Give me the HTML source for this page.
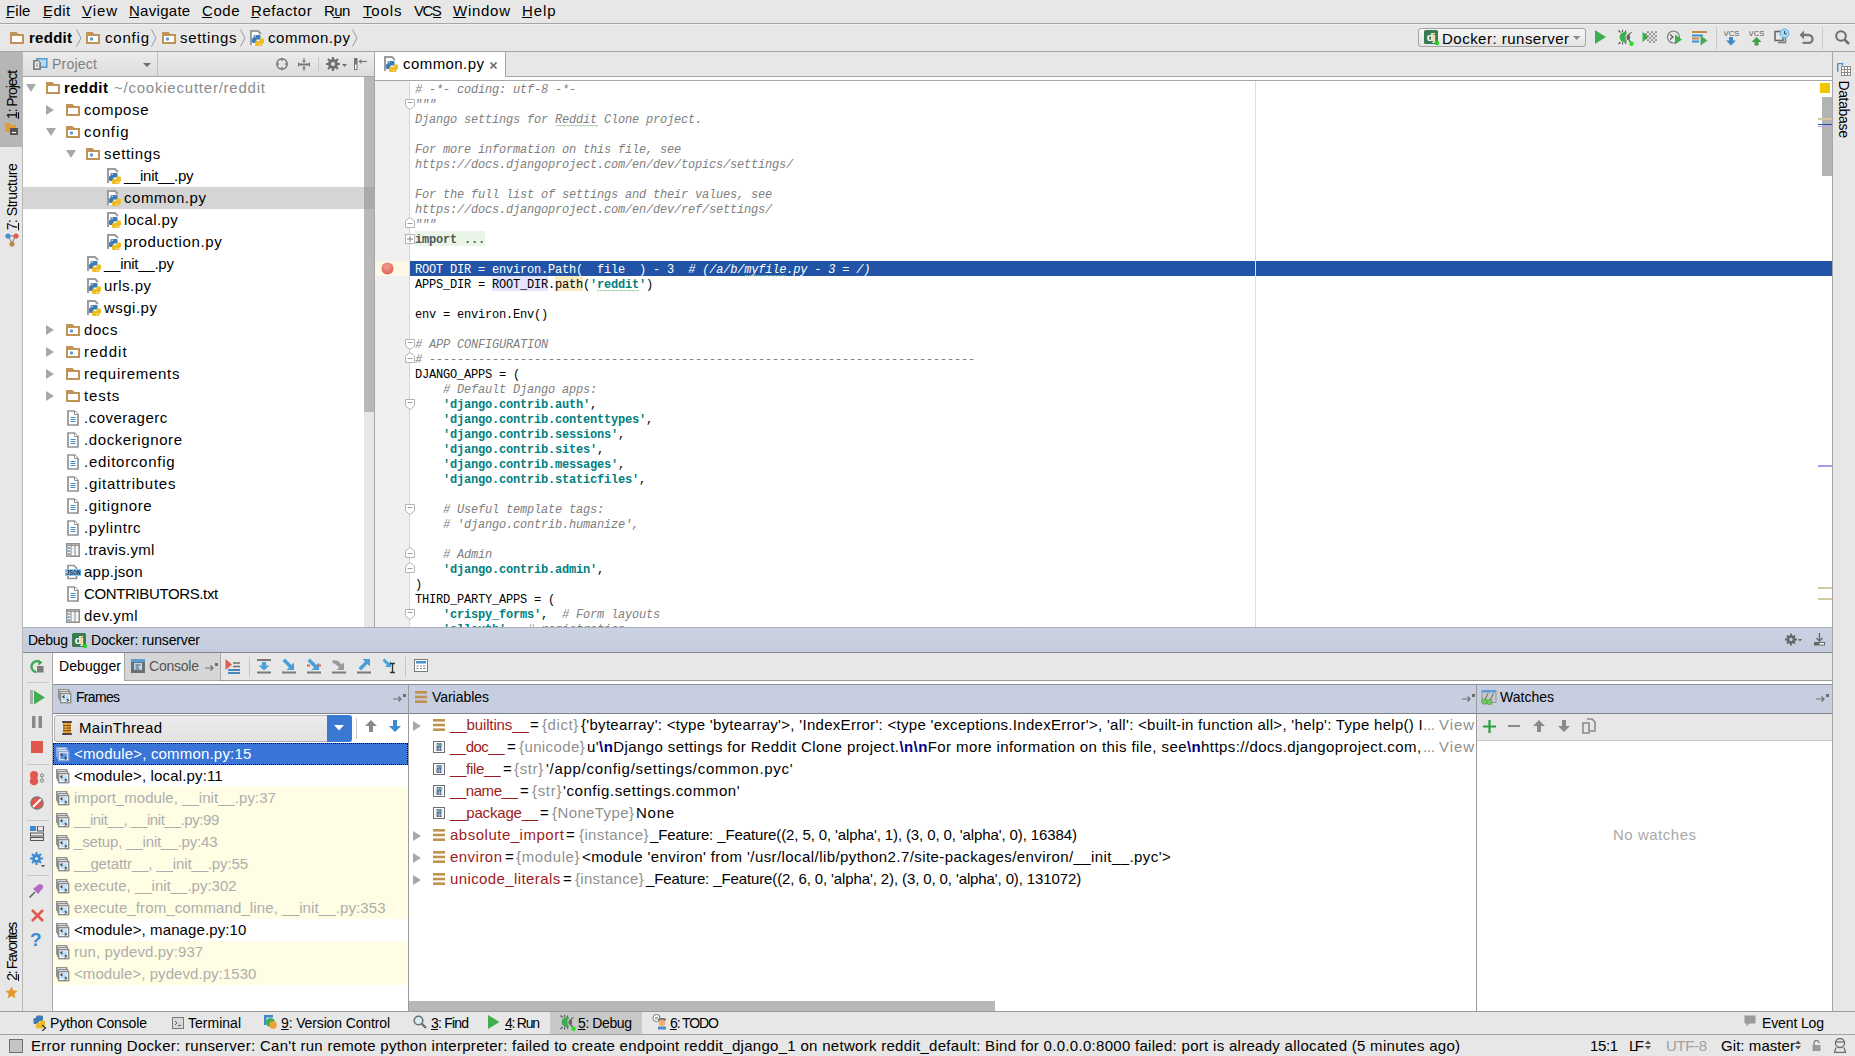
<!DOCTYPE html>
<html><head><meta charset="utf-8"><style>
html,body{margin:0;padding:0;}
body{width:1855px;height:1056px;position:relative;overflow:hidden;background:#e8e8e8;font-family:"Liberation Sans",sans-serif;}
.a{position:absolute;}
.t{position:absolute;white-space:pre;line-height:normal;}
u{text-decoration:none;border-bottom:1px solid currentColor;}
</style></head><body>
<div class="a" style="left:0px;top:0px;width:1855px;height:1056px;background:#e7e7e7;"></div>
<div class="a" style="left:0px;top:23px;width:1855px;height:1px;background:#a6a6a6;"></div>
<div class="a" style="left:0px;top:24px;width:1855px;height:1px;background:#f0f0f0;"></div>
<div class="a" style="left:0px;top:51px;width:1855px;height:1px;background:#a6a6a6;"></div>
<div class="a" style="left:0px;top:52px;width:22px;height:960px;background:#e7e7e7;"></div>
<div class="a" style="left:22px;top:52px;width:1px;height:960px;background:#b8b8b8;"></div>
<div class="a" style="left:0px;top:52px;width:22px;height:95px;background:#b6b6b6;"></div>
<div class="a" style="left:1832px;top:52px;width:1px;height:960px;background:#a6a6a6;"></div>
<div class="a" style="left:23px;top:52px;width:352px;height:24px;background:linear-gradient(#ececec,#dcdcdc);"></div>
<div class="a" style="left:23px;top:76px;width:352px;height:1px;background:#a6a6a6;"></div>
<div class="a" style="left:157px;top:52px;width:1px;height:24px;background:#c0c0c0;"></div>
<div class="a" style="left:23px;top:77px;width:341px;height:550px;background:#ffffff;"></div>
<div class="a" style="left:364px;top:77px;width:10px;height:335px;background:#b8b8b8;"></div>
<div class="a" style="left:374px;top:52px;width:1px;height:575px;background:#a6a6a6;"></div>
<div class="a" style="left:375px;top:52px;width:1457px;height:24px;background:#e7e7e7;"></div>
<div class="a" style="left:375px;top:76px;width:1457px;height:1px;background:#a6a6a6;"></div>
<div class="a" style="left:375px;top:77px;width:1457px;height:3px;background:#ffffff;"></div>
<div class="a" style="left:375px;top:80px;width:1457px;height:1px;background:#a6a6a6;"></div>
<div class="a" style="left:375px;top:81px;width:1457px;height:546px;background:#ffffff;"></div>
<div class="a" style="left:375px;top:81px;width:35px;height:546px;background:#f0f0f0;"></div>
<div class="a" style="left:409px;top:81px;width:1px;height:546px;background:#d6d6d6;"></div>
<div class="a" style="left:1822px;top:97px;width:10px;height:79px;background:#b3b3b3;"></div>
<div class="t" style="left:6px;top:2px;font-size:15px;color:#000;font-weight:normal;font-style:normal;font-family:'Liberation Sans', sans-serif;letter-spacing:0.076px;">File</div>
<div class="a" style="left:6px;top:17px;width:8px;height:1px;background:#000;"></div>
<div class="t" style="left:43px;top:2px;font-size:15px;color:#000;font-weight:normal;font-style:normal;font-family:'Liberation Sans', sans-serif;letter-spacing:0.447px;">Edit</div>
<div class="a" style="left:43px;top:17px;width:8px;height:1px;background:#000;"></div>
<div class="t" style="left:82px;top:2px;font-size:15px;color:#000;font-weight:normal;font-style:normal;font-family:'Liberation Sans', sans-serif;letter-spacing:0.950px;">View</div>
<div class="a" style="left:82px;top:17px;width:9px;height:1px;background:#000;"></div>
<div class="t" style="left:129px;top:2px;font-size:15px;color:#000;font-weight:normal;font-style:normal;font-family:'Liberation Sans', sans-serif;letter-spacing:0.285px;">Navigate</div>
<div class="a" style="left:129px;top:17px;width:10px;height:1px;background:#000;"></div>
<div class="t" style="left:202px;top:2px;font-size:15px;color:#000;font-weight:normal;font-style:normal;font-family:'Liberation Sans', sans-serif;letter-spacing:0.580px;">Code</div>
<div class="a" style="left:202px;top:17px;width:10px;height:1px;background:#000;"></div>
<div class="t" style="left:251px;top:2px;font-size:15px;color:#000;font-weight:normal;font-style:normal;font-family:'Liberation Sans', sans-serif;letter-spacing:0.585px;">Refactor</div>
<div class="a" style="left:251px;top:17px;width:8px;height:1px;background:#000;"></div>
<div class="t" style="left:324px;top:2px;font-size:15px;color:#000;font-weight:normal;font-style:normal;font-family:'Liberation Sans', sans-serif;letter-spacing:-0.566px;">Run</div>
<div class="a" style="left:333px;top:17px;width:7px;height:1px;background:#000;"></div>
<div class="t" style="left:363px;top:2px;font-size:15px;color:#000;font-weight:normal;font-style:normal;font-family:'Liberation Sans', sans-serif;letter-spacing:0.867px;">Tools</div>
<div class="a" style="left:363px;top:17px;width:9px;height:1px;background:#000;"></div>
<div class="t" style="left:414px;top:2px;font-size:15px;color:#000;font-weight:normal;font-style:normal;font-family:'Liberation Sans', sans-serif;letter-spacing:-1.572px;">VCS</div>
<div class="a" style="left:433px;top:17px;width:8px;height:1px;background:#000;"></div>
<div class="t" style="left:453px;top:2px;font-size:15px;color:#000;font-weight:normal;font-style:normal;font-family:'Liberation Sans', sans-serif;letter-spacing:0.728px;">Window</div>
<div class="a" style="left:453px;top:17px;width:13px;height:1px;background:#000;"></div>
<div class="t" style="left:522px;top:2px;font-size:15px;color:#000;font-weight:normal;font-style:normal;font-family:'Liberation Sans', sans-serif;letter-spacing:0.914px;">Help</div>
<div class="a" style="left:522px;top:17px;width:10px;height:1px;background:#000;"></div>
<svg class="a" style="left:10px;top:32px" width="14" height="12" viewBox="0 0 14 12"><path d="M0 0h6.5l2 2h5.5v10h-14z" fill="#c09458"/><rect x="2" y="4" width="10" height="6" fill="#fff"/></svg>
<div class="t" style="left:29px;top:29px;font-size:15px;color:#000;font-weight:bold;font-style:normal;font-family:'Liberation Sans', sans-serif;letter-spacing:0.266px;">reddit</div>
<svg class="a" style="left:76px;top:29px" width="6" height="18" viewBox="0 0 6 18"><path d="M0.5 0.5L5 9L0.5 17.5" fill="none" stroke="#9a9a9a" stroke-width="1"/></svg>
<svg class="a" style="left:86px;top:32px" width="14" height="12" viewBox="0 0 14 12"><path d="M0 0h6.5l2 2h5.5v10h-14z" fill="#c09458"/><rect x="2" y="4" width="10" height="6" fill="#fff"/><circle cx="5.5" cy="7" r="1.7" fill="#5f9ccc"/></svg>
<div class="t" style="left:105px;top:29px;font-size:15px;color:#000;font-weight:normal;font-style:normal;font-family:'Liberation Sans', sans-serif;letter-spacing:0.794px;">config</div>
<svg class="a" style="left:151px;top:29px" width="6" height="18" viewBox="0 0 6 18"><path d="M0.5 0.5L5 9L0.5 17.5" fill="none" stroke="#9a9a9a" stroke-width="1"/></svg>
<svg class="a" style="left:162px;top:32px" width="14" height="12" viewBox="0 0 14 12"><path d="M0 0h6.5l2 2h5.5v10h-14z" fill="#c09458"/><rect x="2" y="4" width="10" height="6" fill="#fff"/><circle cx="5.5" cy="7" r="1.7" fill="#5f9ccc"/></svg>
<div class="t" style="left:180px;top:29px;font-size:15px;color:#000;font-weight:normal;font-style:normal;font-family:'Liberation Sans', sans-serif;letter-spacing:0.685px;">settings</div>
<svg class="a" style="left:240px;top:29px" width="6" height="18" viewBox="0 0 6 18"><path d="M0.5 0.5L5 9L0.5 17.5" fill="none" stroke="#9a9a9a" stroke-width="1"/></svg>
<svg class="a" style="left:250px;top:30px" width="14" height="16" viewBox="0 0 14 16"><path d="M1 15V1h7l3 3" fill="none" stroke="#9b9b9b" stroke-width="2"/><rect x="2" y="2" width="6" height="13" fill="#fff"/><rect x="3.5" y="5" width="7" height="4.5" rx="1.3" fill="#3d7ab6"/><rect x="2" y="8" width="4.5" height="5" rx="1.2" fill="#3d7ab6"/><rect x="9.5" y="8.5" width="4.5" height="5" rx="1.2" fill="#edbb22"/><rect x="5" y="11" width="7.5" height="5" rx="1.3" fill="#edbb22"/><circle cx="5.2" cy="6.3" r="0.7" fill="#fff"/><circle cx="10" cy="14.5" r="0.7" fill="#fff"/></svg>
<div class="t" style="left:268px;top:29px;font-size:15px;color:#000;font-weight:normal;font-style:normal;font-family:'Liberation Sans', sans-serif;letter-spacing:0.559px;">common.py</div>
<svg class="a" style="left:352px;top:29px" width="6" height="18" viewBox="0 0 6 18"><path d="M0.5 0.5L5 9L0.5 17.5" fill="none" stroke="#9a9a9a" stroke-width="1"/></svg>
<svg class="a" style="left:33px;top:58px" width="15" height="13" viewBox="0 0 15 13"><rect x="3.8" y="0.8" width="10" height="8.4" fill="#b5dbf4" stroke="#5a9ccc" stroke-width="1.6"/><path d="M0 2h5.5l2.5 2.5V12H0z" fill="#808080"/><rect x="1.8" y="3.5" width="4.4" height="6.8" fill="#eee"/><path d="M3 6h2M3 8h2" stroke="#808080" stroke-width="1"/></svg>
<div class="t" style="left:52px;top:56px;font-size:14px;color:#7f7f7f;font-weight:normal;font-style:normal;font-family:'Liberation Sans', sans-serif;letter-spacing:0.237px;">Project</div>
<svg class="a" style="left:143px;top:63px" width="9" height="5" viewBox="0 0 9 5"><path d="M0 0h8l-4 4z" fill="#6e6e6e"/></svg>
<svg class="a" style="left:276px;top:58px" width="12" height="12" viewBox="0 0 12 12"><circle cx="6" cy="6" r="5.2" fill="none" stroke="#777" stroke-width="1.4"/><path d="M6 0.5v2.5M6 9v2.5M0.5 6h2.5M9 6h2.5" stroke="#777" stroke-width="1.4"/></svg>
<svg class="a" style="left:298px;top:58px" width="12" height="13" viewBox="0 0 12 13"><path d="M0.5 4.5v1.5h11V4.5M0.5 8.5V7h11v1.5" fill="none" stroke="#777" stroke-width="1.1"/><path d="M6 0v4M6 9v4" stroke="#777" stroke-width="1.1"/><path d="M4 2.5L6 5L8 2.5zM4 10.5L6 8L8 10.5z" fill="#777"/></svg>
<div class="a" style="left:318px;top:57px;width:1px;height:14px;background:#c6c6c6;"></div>
<svg class="a" style="left:326px;top:57px" width="21" height="14" viewBox="0 0 21 14"><circle cx="7" cy="7" r="3.5" fill="none" stroke="#707070" stroke-width="3"/><path d="M7 0v3M7 11v3M0 7h3M11 7h3M2 2l2 2M10 10l2 2M12 2l-2 2M2 12l2-2" stroke="#707070" stroke-width="2.2"/><path d="M16 7h5l-2.5 3z" fill="#707070"/></svg>
<svg class="a" style="left:354px;top:58px" width="13" height="12" viewBox="0 0 13 12"><rect x="0.5" y="0.5" width="2.5" height="11" fill="#fff" stroke="#777"/><rect x="0.5" y="0.5" width="2.5" height="6" fill="#777"/><path d="M5 3.5h8" stroke="#777" stroke-width="1.2"/><path d="M4.5 3.5L7.5 1V6z" fill="#777"/></svg>
<svg class="a" style="left:46px;top:82px" width="14" height="12" viewBox="0 0 14 12"><path d="M0 0h6.5l2 2h5.5v10h-14z" fill="#c09458"/><rect x="2" y="4" width="10" height="6" fill="#fff"/></svg>
<svg class="a" style="left:26px;top:84px" width="10" height="9" viewBox="0 0 10 9"><path d="M0 0L10 0L5 8z" fill="#a8a8a8"/></svg>
<div class="t" style="left:64px;top:79px;font-size:15px;color:#000;font-weight:bold;font-style:normal;font-family:'Liberation Sans', sans-serif;letter-spacing:0.466px;">reddit</div>
<div class="t" style="left:114px;top:79px;font-size:15px;color:#8c8c8c;font-weight:normal;font-style:normal;font-family:'Liberation Sans', sans-serif;letter-spacing:0.775px;">~/cookiecutter/reddit</div>
<svg class="a" style="left:66px;top:104px" width="14" height="12" viewBox="0 0 14 12"><path d="M0 0h6.5l2 2h5.5v10h-14z" fill="#c09458"/><rect x="2" y="4" width="10" height="6" fill="#fff"/></svg>
<svg class="a" style="left:46px;top:105px" width="9" height="10" viewBox="0 0 9 10"><path d="M0 0L8 5L0 10z" fill="#a8a8a8"/></svg>
<div class="t" style="left:84px;top:101px;font-size:15px;color:#000;font-weight:normal;font-style:normal;font-family:'Liberation Sans', sans-serif;letter-spacing:0.604px;">compose</div>
<svg class="a" style="left:66px;top:126px" width="14" height="12" viewBox="0 0 14 12"><path d="M0 0h6.5l2 2h5.5v10h-14z" fill="#c09458"/><rect x="2" y="4" width="10" height="6" fill="#fff"/><circle cx="5.5" cy="7" r="1.7" fill="#5f9ccc"/></svg>
<svg class="a" style="left:46px;top:128px" width="10" height="9" viewBox="0 0 10 9"><path d="M0 0L10 0L5 8z" fill="#a8a8a8"/></svg>
<div class="t" style="left:84px;top:123px;font-size:15px;color:#000;font-weight:normal;font-style:normal;font-family:'Liberation Sans', sans-serif;letter-spacing:0.894px;">config</div>
<svg class="a" style="left:86px;top:148px" width="14" height="12" viewBox="0 0 14 12"><path d="M0 0h6.5l2 2h5.5v10h-14z" fill="#c09458"/><rect x="2" y="4" width="10" height="6" fill="#fff"/><circle cx="5.5" cy="7" r="1.7" fill="#5f9ccc"/></svg>
<svg class="a" style="left:66px;top:150px" width="10" height="9" viewBox="0 0 10 9"><path d="M0 0L10 0L5 8z" fill="#a8a8a8"/></svg>
<div class="t" style="left:104px;top:145px;font-size:15px;color:#000;font-weight:normal;font-style:normal;font-family:'Liberation Sans', sans-serif;letter-spacing:0.650px;">settings</div>
<svg class="a" style="left:107px;top:168px" width="14" height="16" viewBox="0 0 14 16"><path d="M1 15V1h7l3 3" fill="none" stroke="#9b9b9b" stroke-width="2"/><rect x="2" y="2" width="6" height="13" fill="#fff"/><rect x="3.5" y="5" width="7" height="4.5" rx="1.3" fill="#3d7ab6"/><rect x="2" y="8" width="4.5" height="5" rx="1.2" fill="#3d7ab6"/><rect x="9.5" y="8.5" width="4.5" height="5" rx="1.2" fill="#edbb22"/><rect x="5" y="11" width="7.5" height="5" rx="1.3" fill="#edbb22"/><circle cx="5.2" cy="6.3" r="0.7" fill="#fff"/><circle cx="10" cy="14.5" r="0.7" fill="#fff"/></svg>
<div class="t" style="left:124px;top:167px;font-size:15px;color:#000;font-weight:normal;font-style:normal;font-family:'Liberation Sans', sans-serif;letter-spacing:-0.306px;">__init__.py</div>
<div class="a" style="left:23px;top:187px;width:341px;height:22px;background:#d5d5d5;"></div>
<div class="a" style="left:364px;top:187px;width:10px;height:22px;background:rgba(0,0,0,0.08);"></div>
<svg class="a" style="left:107px;top:190px" width="14" height="16" viewBox="0 0 14 16"><path d="M1 15V1h7l3 3" fill="none" stroke="#9b9b9b" stroke-width="2"/><rect x="2" y="2" width="6" height="13" fill="#fff"/><rect x="3.5" y="5" width="7" height="4.5" rx="1.3" fill="#3d7ab6"/><rect x="2" y="8" width="4.5" height="5" rx="1.2" fill="#3d7ab6"/><rect x="9.5" y="8.5" width="4.5" height="5" rx="1.2" fill="#edbb22"/><rect x="5" y="11" width="7.5" height="5" rx="1.3" fill="#edbb22"/><circle cx="5.2" cy="6.3" r="0.7" fill="#fff"/><circle cx="10" cy="14.5" r="0.7" fill="#fff"/></svg>
<div class="t" style="left:124px;top:189px;font-size:15px;color:#000;font-weight:normal;font-style:normal;font-family:'Liberation Sans', sans-serif;letter-spacing:0.559px;">common.py</div>
<svg class="a" style="left:107px;top:212px" width="14" height="16" viewBox="0 0 14 16"><path d="M1 15V1h7l3 3" fill="none" stroke="#9b9b9b" stroke-width="2"/><rect x="2" y="2" width="6" height="13" fill="#fff"/><rect x="3.5" y="5" width="7" height="4.5" rx="1.3" fill="#3d7ab6"/><rect x="2" y="8" width="4.5" height="5" rx="1.2" fill="#3d7ab6"/><rect x="9.5" y="8.5" width="4.5" height="5" rx="1.2" fill="#edbb22"/><rect x="5" y="11" width="7.5" height="5" rx="1.3" fill="#edbb22"/><circle cx="5.2" cy="6.3" r="0.7" fill="#fff"/><circle cx="10" cy="14.5" r="0.7" fill="#fff"/></svg>
<div class="t" style="left:124px;top:211px;font-size:15px;color:#000;font-weight:normal;font-style:normal;font-family:'Liberation Sans', sans-serif;letter-spacing:0.413px;">local.py</div>
<svg class="a" style="left:107px;top:234px" width="14" height="16" viewBox="0 0 14 16"><path d="M1 15V1h7l3 3" fill="none" stroke="#9b9b9b" stroke-width="2"/><rect x="2" y="2" width="6" height="13" fill="#fff"/><rect x="3.5" y="5" width="7" height="4.5" rx="1.3" fill="#3d7ab6"/><rect x="2" y="8" width="4.5" height="5" rx="1.2" fill="#3d7ab6"/><rect x="9.5" y="8.5" width="4.5" height="5" rx="1.2" fill="#edbb22"/><rect x="5" y="11" width="7.5" height="5" rx="1.3" fill="#edbb22"/><circle cx="5.2" cy="6.3" r="0.7" fill="#fff"/><circle cx="10" cy="14.5" r="0.7" fill="#fff"/></svg>
<div class="t" style="left:124px;top:233px;font-size:15px;color:#000;font-weight:normal;font-style:normal;font-family:'Liberation Sans', sans-serif;letter-spacing:0.641px;">production.py</div>
<svg class="a" style="left:87px;top:256px" width="14" height="16" viewBox="0 0 14 16"><path d="M1 15V1h7l3 3" fill="none" stroke="#9b9b9b" stroke-width="2"/><rect x="2" y="2" width="6" height="13" fill="#fff"/><rect x="3.5" y="5" width="7" height="4.5" rx="1.3" fill="#3d7ab6"/><rect x="2" y="8" width="4.5" height="5" rx="1.2" fill="#3d7ab6"/><rect x="9.5" y="8.5" width="4.5" height="5" rx="1.2" fill="#edbb22"/><rect x="5" y="11" width="7.5" height="5" rx="1.3" fill="#edbb22"/><circle cx="5.2" cy="6.3" r="0.7" fill="#fff"/><circle cx="10" cy="14.5" r="0.7" fill="#fff"/></svg>
<div class="t" style="left:104px;top:255px;font-size:15px;color:#000;font-weight:normal;font-style:normal;font-family:'Liberation Sans', sans-serif;letter-spacing:-0.266px;">__init__.py</div>
<svg class="a" style="left:87px;top:278px" width="14" height="16" viewBox="0 0 14 16"><path d="M1 15V1h7l3 3" fill="none" stroke="#9b9b9b" stroke-width="2"/><rect x="2" y="2" width="6" height="13" fill="#fff"/><rect x="3.5" y="5" width="7" height="4.5" rx="1.3" fill="#3d7ab6"/><rect x="2" y="8" width="4.5" height="5" rx="1.2" fill="#3d7ab6"/><rect x="9.5" y="8.5" width="4.5" height="5" rx="1.2" fill="#edbb22"/><rect x="5" y="11" width="7.5" height="5" rx="1.3" fill="#edbb22"/><circle cx="5.2" cy="6.3" r="0.7" fill="#fff"/><circle cx="10" cy="14.5" r="0.7" fill="#fff"/></svg>
<div class="t" style="left:104px;top:277px;font-size:15px;color:#000;font-weight:normal;font-style:normal;font-family:'Liberation Sans', sans-serif;letter-spacing:0.469px;">urls.py</div>
<svg class="a" style="left:87px;top:300px" width="14" height="16" viewBox="0 0 14 16"><path d="M1 15V1h7l3 3" fill="none" stroke="#9b9b9b" stroke-width="2"/><rect x="2" y="2" width="6" height="13" fill="#fff"/><rect x="3.5" y="5" width="7" height="4.5" rx="1.3" fill="#3d7ab6"/><rect x="2" y="8" width="4.5" height="5" rx="1.2" fill="#3d7ab6"/><rect x="9.5" y="8.5" width="4.5" height="5" rx="1.2" fill="#edbb22"/><rect x="5" y="11" width="7.5" height="5" rx="1.3" fill="#edbb22"/><circle cx="5.2" cy="6.3" r="0.7" fill="#fff"/><circle cx="10" cy="14.5" r="0.7" fill="#fff"/></svg>
<div class="t" style="left:104px;top:299px;font-size:15px;color:#000;font-weight:normal;font-style:normal;font-family:'Liberation Sans', sans-serif;letter-spacing:0.478px;">wsgi.py</div>
<svg class="a" style="left:66px;top:324px" width="14" height="12" viewBox="0 0 14 12"><path d="M0 0h6.5l2 2h5.5v10h-14z" fill="#c09458"/><rect x="2" y="4" width="10" height="6" fill="#fff"/><circle cx="5.5" cy="7" r="1.7" fill="#5f9ccc"/></svg>
<svg class="a" style="left:46px;top:325px" width="9" height="10" viewBox="0 0 9 10"><path d="M0 0L8 5L0 10z" fill="#a8a8a8"/></svg>
<div class="t" style="left:84px;top:321px;font-size:15px;color:#000;font-weight:normal;font-style:normal;font-family:'Liberation Sans', sans-serif;letter-spacing:0.571px;">docs</div>
<svg class="a" style="left:66px;top:346px" width="14" height="12" viewBox="0 0 14 12"><path d="M0 0h6.5l2 2h5.5v10h-14z" fill="#c09458"/><rect x="2" y="4" width="10" height="6" fill="#fff"/><circle cx="5.5" cy="7" r="1.7" fill="#5f9ccc"/></svg>
<svg class="a" style="left:46px;top:347px" width="9" height="10" viewBox="0 0 9 10"><path d="M0 0L8 5L0 10z" fill="#a8a8a8"/></svg>
<div class="t" style="left:84px;top:343px;font-size:15px;color:#000;font-weight:normal;font-style:normal;font-family:'Liberation Sans', sans-serif;letter-spacing:1.014px;">reddit</div>
<svg class="a" style="left:66px;top:368px" width="14" height="12" viewBox="0 0 14 12"><path d="M0 0h6.5l2 2h5.5v10h-14z" fill="#c09458"/><rect x="2" y="4" width="10" height="6" fill="#fff"/></svg>
<svg class="a" style="left:46px;top:369px" width="9" height="10" viewBox="0 0 9 10"><path d="M0 0L8 5L0 10z" fill="#a8a8a8"/></svg>
<div class="t" style="left:84px;top:365px;font-size:15px;color:#000;font-weight:normal;font-style:normal;font-family:'Liberation Sans', sans-serif;letter-spacing:0.714px;">requirements</div>
<svg class="a" style="left:66px;top:390px" width="14" height="12" viewBox="0 0 14 12"><path d="M0 0h6.5l2 2h5.5v10h-14z" fill="#c09458"/><rect x="2" y="4" width="10" height="6" fill="#fff"/></svg>
<svg class="a" style="left:46px;top:391px" width="9" height="10" viewBox="0 0 9 10"><path d="M0 0L8 5L0 10z" fill="#a8a8a8"/></svg>
<div class="t" style="left:84px;top:387px;font-size:15px;color:#000;font-weight:normal;font-style:normal;font-family:'Liberation Sans', sans-serif;letter-spacing:0.878px;">tests</div>
<svg class="a" style="left:67px;top:410px" width="12" height="16" viewBox="0 0 12 16"><path d="M1 1h6.5l3.5 3.5V15H1z" fill="#fff" stroke="#939393" stroke-width="1.7"/><path d="M7.5 1v3.5H11" fill="#fff" stroke="#939393" stroke-width="1"/><path d="M3.5 7.5h5M3.5 9.5h5M3.5 11.5h5" stroke="#3d8ac4" stroke-width="1"/></svg>
<div class="t" style="left:84px;top:409px;font-size:15px;color:#000;font-weight:normal;font-style:normal;font-family:'Liberation Sans', sans-serif;letter-spacing:0.482px;">.coveragerc</div>
<svg class="a" style="left:67px;top:432px" width="12" height="16" viewBox="0 0 12 16"><path d="M1 1h6.5l3.5 3.5V15H1z" fill="#fff" stroke="#939393" stroke-width="1.7"/><path d="M7.5 1v3.5H11" fill="#fff" stroke="#939393" stroke-width="1"/><path d="M3.5 7.5h5M3.5 9.5h5M3.5 11.5h5" stroke="#3d8ac4" stroke-width="1"/></svg>
<div class="t" style="left:84px;top:431px;font-size:15px;color:#000;font-weight:normal;font-style:normal;font-family:'Liberation Sans', sans-serif;letter-spacing:0.592px;">.dockerignore</div>
<svg class="a" style="left:67px;top:454px" width="12" height="16" viewBox="0 0 12 16"><path d="M1 1h6.5l3.5 3.5V15H1z" fill="#fff" stroke="#939393" stroke-width="1.7"/><path d="M7.5 1v3.5H11" fill="#fff" stroke="#939393" stroke-width="1"/><path d="M3.5 7.5h5M3.5 9.5h5M3.5 11.5h5" stroke="#3d8ac4" stroke-width="1"/></svg>
<div class="t" style="left:84px;top:453px;font-size:15px;color:#000;font-weight:normal;font-style:normal;font-family:'Liberation Sans', sans-serif;letter-spacing:0.740px;">.editorconfig</div>
<svg class="a" style="left:67px;top:476px" width="12" height="16" viewBox="0 0 12 16"><path d="M1 1h6.5l3.5 3.5V15H1z" fill="#fff" stroke="#939393" stroke-width="1.7"/><path d="M7.5 1v3.5H11" fill="#fff" stroke="#939393" stroke-width="1"/><path d="M3.5 7.5h5M3.5 9.5h5M3.5 11.5h5" stroke="#3d8ac4" stroke-width="1"/></svg>
<div class="t" style="left:84px;top:475px;font-size:15px;color:#000;font-weight:normal;font-style:normal;font-family:'Liberation Sans', sans-serif;letter-spacing:0.745px;">.gitattributes</div>
<svg class="a" style="left:67px;top:498px" width="12" height="16" viewBox="0 0 12 16"><path d="M1 1h6.5l3.5 3.5V15H1z" fill="#fff" stroke="#939393" stroke-width="1.7"/><path d="M7.5 1v3.5H11" fill="#fff" stroke="#939393" stroke-width="1"/><path d="M3.5 7.5h5M3.5 9.5h5M3.5 11.5h5" stroke="#3d8ac4" stroke-width="1"/></svg>
<div class="t" style="left:84px;top:497px;font-size:15px;color:#000;font-weight:normal;font-style:normal;font-family:'Liberation Sans', sans-serif;letter-spacing:0.665px;">.gitignore</div>
<svg class="a" style="left:67px;top:520px" width="12" height="16" viewBox="0 0 12 16"><path d="M1 1h6.5l3.5 3.5V15H1z" fill="#fff" stroke="#939393" stroke-width="1.7"/><path d="M7.5 1v3.5H11" fill="#fff" stroke="#939393" stroke-width="1"/><path d="M3.5 7.5h5M3.5 9.5h5M3.5 11.5h5" stroke="#3d8ac4" stroke-width="1"/></svg>
<div class="t" style="left:84px;top:519px;font-size:15px;color:#000;font-weight:normal;font-style:normal;font-family:'Liberation Sans', sans-serif;letter-spacing:0.614px;">.pylintrc</div>
<svg class="a" style="left:66px;top:543px" width="14" height="14" viewBox="0 0 14 14"><rect x="0.8" y="0.8" width="12.4" height="12.4" fill="#fff" stroke="#939393" stroke-width="1.6"/><path d="M0.8 2.5h12.4" stroke="#939393" stroke-width="1.2"/><path d="M5 1v12M9 1v12" stroke="#939393" stroke-width="1.2"/><path d="M5.8 6h2.5M5.8 9h2.5M9.8 6h2.5M9.8 9h2.5" stroke="#dadada" stroke-width="0.8"/><rect x="2" y="4.3" width="1.8" height="1.6" fill="#4a90c8"/><rect x="2" y="7.3" width="1.8" height="1.6" fill="#4a90c8"/><rect x="2" y="10.3" width="1.8" height="1.6" fill="#4a90c8"/></svg>
<div class="t" style="left:84px;top:541px;font-size:15px;color:#000;font-weight:normal;font-style:normal;font-family:'Liberation Sans', sans-serif;letter-spacing:0.280px;">.travis.yml</div>
<svg class="a" style="left:65px;top:564px" width="16" height="16" viewBox="0 0 16 16"><path d="M3 1.5h6l2.5 2.5V14.5H3z" fill="#fff" stroke="#939393" stroke-width="1.7"/><rect x="0" y="5" width="16" height="7" fill="#8ccbf3"/><text x="8" y="10.8" font-size="6.6" font-family="Liberation Mono" font-weight="bold" fill="#333" text-anchor="middle" letter-spacing="-0.3">JSON</text></svg>
<div class="t" style="left:84px;top:563px;font-size:15px;color:#000;font-weight:normal;font-style:normal;font-family:'Liberation Sans', sans-serif;letter-spacing:0.254px;">app.json</div>
<svg class="a" style="left:67px;top:586px" width="12" height="16" viewBox="0 0 12 16"><path d="M1 1h6.5l3.5 3.5V15H1z" fill="#fff" stroke="#939393" stroke-width="1.7"/><path d="M7.5 1v3.5H11" fill="#fff" stroke="#939393" stroke-width="1"/><path d="M3.5 7.5h5M3.5 9.5h5M3.5 11.5h5" stroke="#3d8ac4" stroke-width="1"/></svg>
<div class="t" style="left:84px;top:585px;font-size:15px;color:#000;font-weight:normal;font-style:normal;font-family:'Liberation Sans', sans-serif;letter-spacing:-0.369px;">CONTRIBUTORS.txt</div>
<svg class="a" style="left:66px;top:609px" width="14" height="14" viewBox="0 0 14 14"><rect x="0.8" y="0.8" width="12.4" height="12.4" fill="#fff" stroke="#939393" stroke-width="1.6"/><path d="M0.8 2.5h12.4" stroke="#939393" stroke-width="1.2"/><path d="M5 1v12M9 1v12" stroke="#939393" stroke-width="1.2"/><path d="M5.8 6h2.5M5.8 9h2.5M9.8 6h2.5M9.8 9h2.5" stroke="#dadada" stroke-width="0.8"/><rect x="2" y="4.3" width="1.8" height="1.6" fill="#4a90c8"/><rect x="2" y="7.3" width="1.8" height="1.6" fill="#4a90c8"/><rect x="2" y="10.3" width="1.8" height="1.6" fill="#4a90c8"/></svg>
<div class="t" style="left:84px;top:607px;font-size:15px;color:#000;font-weight:normal;font-style:normal;font-family:'Liberation Sans', sans-serif;letter-spacing:0.520px;">dev.yml</div>
<div class="a" style="left:375px;top:52px;width:130px;height:28px;background:#ffffff;"></div>
<div class="a" style="left:505px;top:52px;width:1px;height:25px;background:#a6a6a6;"></div>
<svg class="a" style="left:384px;top:56px" width="14" height="16" viewBox="0 0 14 16"><path d="M1 15V1h7l3 3" fill="none" stroke="#9b9b9b" stroke-width="2"/><rect x="2" y="2" width="6" height="13" fill="#fff"/><rect x="3.5" y="5" width="7" height="4.5" rx="1.3" fill="#3d7ab6"/><rect x="2" y="8" width="4.5" height="5" rx="1.2" fill="#3d7ab6"/><rect x="9.5" y="8.5" width="4.5" height="5" rx="1.2" fill="#edbb22"/><rect x="5" y="11" width="7.5" height="5" rx="1.3" fill="#edbb22"/><circle cx="5.2" cy="6.3" r="0.7" fill="#fff"/><circle cx="10" cy="14.5" r="0.7" fill="#fff"/></svg>
<div class="t" style="left:403px;top:55px;font-size:15px;color:#000;font-weight:normal;font-style:normal;font-family:'Liberation Sans', sans-serif;letter-spacing:0.434px;">common.py</div>
<svg class="a" style="left:490px;top:62px" width="7" height="7" viewBox="0 0 7 7"><path d="M0.5 0.5L6.5 6.5M6.5 0.5L0.5 6.5" stroke="#6e6e6e" stroke-width="1.6"/></svg>
<div class="a" style="left:410px;top:261px;width:1422px;height:15px;background:#2154a6;"></div>
<div class="a" style="left:1255px;top:81px;width:1px;height:546px;background:#dedede;"></div>
<div class="a" style="left:375px;top:261px;width:34px;height:15px;background:#fcf8e4;"></div>
<div class="a" style="left:415px;top:231px;width:70px;height:15px;background:#e9f5e6;"></div>
<div class="a" style="left:492px;top:276px;width:56px;height:15px;background:#e4e4ff;"></div>
<div class="a" style="left:555px;top:276px;width:28px;height:15px;background:#f8ebc4;"></div>
<div class="t" style="left:415px;top:83px;font-family:'Liberation Mono', monospace;font-size:12px;letter-spacing:-0.2px;color:#000;"><span style="color:#808080;font-style:italic"># -*- coding: utf-8 -*-</span></div>
<div class="t" style="left:415px;top:98px;font-family:'Liberation Mono', monospace;font-size:12px;letter-spacing:-0.2px;color:#000;"><span style="color:#808080;font-style:italic">&quot;&quot;&quot;</span></div>
<div class="t" style="left:415px;top:113px;font-family:'Liberation Mono', monospace;font-size:12px;letter-spacing:-0.2px;color:#000;"><span style="color:#808080;font-style:italic">Django settings for Reddit Clone project.</span></div>
<div class="t" style="left:415px;top:143px;font-family:'Liberation Mono', monospace;font-size:12px;letter-spacing:-0.2px;color:#000;"><span style="color:#808080;font-style:italic">For more information on this file, see</span></div>
<div class="t" style="left:415px;top:158px;font-family:'Liberation Mono', monospace;font-size:12px;letter-spacing:-0.2px;color:#000;"><span style="color:#808080;font-style:italic">https://docs.djangoproject.com/en/dev/topics/settings/</span></div>
<div class="t" style="left:415px;top:188px;font-family:'Liberation Mono', monospace;font-size:12px;letter-spacing:-0.2px;color:#000;"><span style="color:#808080;font-style:italic">For the full list of settings and their values, see</span></div>
<div class="t" style="left:415px;top:203px;font-family:'Liberation Mono', monospace;font-size:12px;letter-spacing:-0.2px;color:#000;"><span style="color:#808080;font-style:italic">https://docs.djangoproject.com/en/dev/ref/settings/</span></div>
<div class="t" style="left:415px;top:218px;font-family:'Liberation Mono', monospace;font-size:12px;letter-spacing:-0.2px;color:#000;"><span style="color:#808080;font-style:italic">&quot;&quot;&quot;</span></div>
<div class="t" style="left:415px;top:233px;font-family:'Liberation Mono', monospace;font-size:12px;letter-spacing:-0.2px;color:#000;"><span style="color:#555;font-weight:bold">import ...</span></div>
<div class="t" style="left:415px;top:263px;font-family:'Liberation Mono', monospace;font-size:12px;letter-spacing:-0.2px;color:#000;color:#fff">ROOT<span style="color:#2154a6">_</span>DIR = environ.Path(<span style="color:#2154a6">__</span>file<span style="color:#2154a6">__</span>) - 3  <span style="font-style:italic"># (/a/b/myfile.py - 3 = /)</span></div>
<div class="t" style="left:415px;top:278px;font-family:'Liberation Mono', monospace;font-size:12px;letter-spacing:-0.2px;color:#000;">APPS_DIR = ROOT_DIR.path(<span style="color:#008080;font-weight:bold">'reddit'</span>)</div>
<div class="t" style="left:415px;top:308px;font-family:'Liberation Mono', monospace;font-size:12px;letter-spacing:-0.2px;color:#000;">env = environ.Env()</div>
<div class="t" style="left:415px;top:338px;font-family:'Liberation Mono', monospace;font-size:12px;letter-spacing:-0.2px;color:#000;"><span style="color:#808080;font-style:italic"># APP CONFIGURATION</span></div>
<div class="t" style="left:415px;top:353px;font-family:'Liberation Mono', monospace;font-size:12px;letter-spacing:-0.2px;color:#000;"><span style="color:#808080;font-style:italic"># ------------------------------------------------------------------------------</span></div>
<div class="t" style="left:415px;top:368px;font-family:'Liberation Mono', monospace;font-size:12px;letter-spacing:-0.2px;color:#000;">DJANGO_APPS = (</div>
<div class="t" style="left:415px;top:383px;font-family:'Liberation Mono', monospace;font-size:12px;letter-spacing:-0.2px;color:#000;">    <span style="color:#808080;font-style:italic"># Default Django apps:</span></div>
<div class="t" style="left:415px;top:398px;font-family:'Liberation Mono', monospace;font-size:12px;letter-spacing:-0.2px;color:#000;">    <span style="color:#008080;font-weight:bold">'django.contrib.auth'</span>,</div>
<div class="t" style="left:415px;top:413px;font-family:'Liberation Mono', monospace;font-size:12px;letter-spacing:-0.2px;color:#000;">    <span style="color:#008080;font-weight:bold">'django.contrib.contenttypes'</span>,</div>
<div class="t" style="left:415px;top:428px;font-family:'Liberation Mono', monospace;font-size:12px;letter-spacing:-0.2px;color:#000;">    <span style="color:#008080;font-weight:bold">'django.contrib.sessions'</span>,</div>
<div class="t" style="left:415px;top:443px;font-family:'Liberation Mono', monospace;font-size:12px;letter-spacing:-0.2px;color:#000;">    <span style="color:#008080;font-weight:bold">'django.contrib.sites'</span>,</div>
<div class="t" style="left:415px;top:458px;font-family:'Liberation Mono', monospace;font-size:12px;letter-spacing:-0.2px;color:#000;">    <span style="color:#008080;font-weight:bold">'django.contrib.messages'</span>,</div>
<div class="t" style="left:415px;top:473px;font-family:'Liberation Mono', monospace;font-size:12px;letter-spacing:-0.2px;color:#000;">    <span style="color:#008080;font-weight:bold">'django.contrib.staticfiles'</span>,</div>
<div class="t" style="left:415px;top:503px;font-family:'Liberation Mono', monospace;font-size:12px;letter-spacing:-0.2px;color:#000;">    <span style="color:#808080;font-style:italic"># Useful template tags:</span></div>
<div class="t" style="left:415px;top:518px;font-family:'Liberation Mono', monospace;font-size:12px;letter-spacing:-0.2px;color:#000;">    <span style="color:#808080;font-style:italic"># 'django.contrib.humanize',</span></div>
<div class="t" style="left:415px;top:548px;font-family:'Liberation Mono', monospace;font-size:12px;letter-spacing:-0.2px;color:#000;">    <span style="color:#808080;font-style:italic"># Admin</span></div>
<div class="t" style="left:415px;top:563px;font-family:'Liberation Mono', monospace;font-size:12px;letter-spacing:-0.2px;color:#000;">    <span style="color:#008080;font-weight:bold">'django.contrib.admin'</span>,</div>
<div class="t" style="left:415px;top:578px;font-family:'Liberation Mono', monospace;font-size:12px;letter-spacing:-0.2px;color:#000;">)</div>
<div class="t" style="left:415px;top:593px;font-family:'Liberation Mono', monospace;font-size:12px;letter-spacing:-0.2px;color:#000;">THIRD_PARTY_APPS = (</div>
<div class="t" style="left:415px;top:608px;font-family:'Liberation Mono', monospace;font-size:12px;letter-spacing:-0.2px;color:#000;">    <span style="color:#008080;font-weight:bold">'crispy_forms'</span>,  <span style="color:#808080;font-style:italic"># Form layouts</span></div>
<div class="t" style="left:415px;top:623px;font-family:'Liberation Mono', monospace;font-size:12px;letter-spacing:-0.2px;color:#000;">    <span style="color:#008080;font-weight:bold">'allauth'</span>,  <span style="color:#808080;font-style:italic"># registration</span></div>
<svg class="a" style="left:556px;top:125px" width="42" height="2" viewBox="0 0 42 2"><polyline points="0,1 1,1 2,0 3,0 4,1 5,1 6,0 7,0 8,1 9,1 10,0 11,0 12,1 13,1 14,0 15,0 16,1 17,1 18,0 19,0 20,1 21,1 22,0 23,0 24,1 25,1 26,0 27,0 28,1 29,1 30,0 31,0 32,1 33,1 34,0 35,0 36,1 37,1 38,0 39,0 40,1 41,1 42,0" fill="none" stroke="#7fbf7f" stroke-width="0.8"/></svg>
<svg class="a" style="left:744px;top:275px" width="42" height="2" viewBox="0 0 42 2"><polyline points="0,1 1,1 2,0 3,0 4,1 5,1 6,0 7,0 8,1 9,1 10,0 11,0 12,1 13,1 14,0 15,0 16,1 17,1 18,0 19,0 20,1 21,1 22,0 23,0 24,1 25,1 26,0 27,0 28,1 29,1 30,0 31,0 32,1 33,1 34,0 35,0 36,1 37,1 38,0 39,0 40,1 41,1 42,0" fill="none" stroke="#7fbf7f" stroke-width="0.8"/></svg>
<svg class="a" style="left:597px;top:290px" width="42" height="2" viewBox="0 0 42 2"><polyline points="0,1 1,1 2,0 3,0 4,1 5,1 6,0 7,0 8,1 9,1 10,0 11,0 12,1 13,1 14,0 15,0 16,1 17,1 18,0 19,0 20,1 21,1 22,0 23,0 24,1 25,1 26,0 27,0 28,1 29,1 30,0 31,0 32,1 33,1 34,0 35,0 36,1 37,1 38,0 39,0 40,1 41,1 42,0" fill="none" stroke="#7fbf7f" stroke-width="0.8"/></svg>
<svg class="a" style="left:381px;top:262px" width="13" height="13" viewBox="0 0 13 13"><defs><radialGradient id="bpg" cx="0.45" cy="0.35" r="0.7"><stop offset="0" stop-color="#f0a096"/><stop offset="1" stop-color="#de5a4e"/></radialGradient></defs><circle cx="6.5" cy="6.5" r="6" fill="url(#bpg)"/></svg>
<svg class="a" style="left:405px;top:99px" width="10" height="11" viewBox="0 0 10 11"><path d="M0.5 0.5h9v6.5l-4.5 3.5l-4.5-3.5z" fill="#fff" stroke="#b4b4b4"/><path d="M2.5 3.5h5" stroke="#a0a0a0"/></svg>
<svg class="a" style="left:405px;top:217px" width="10" height="11" viewBox="0 0 10 11"><path d="M0.5 10.5h9v-6.5l-4.5-3.5l-4.5 3.5z" fill="#fff" stroke="#b4b4b4"/><path d="M2.5 6.5h5" stroke="#a0a0a0"/></svg>
<svg class="a" style="left:405px;top:234px" width="10" height="10" viewBox="0 0 10 10"><rect x="0.5" y="0.5" width="9" height="9" fill="#fff" stroke="#b4b4b4"/><path d="M2 5h6M5 2v6" stroke="#808080"/></svg>
<svg class="a" style="left:405px;top:339px" width="10" height="11" viewBox="0 0 10 11"><path d="M0.5 0.5h9v6.5l-4.5 3.5l-4.5-3.5z" fill="#fff" stroke="#b4b4b4"/><path d="M2.5 3.5h5" stroke="#a0a0a0"/></svg>
<svg class="a" style="left:405px;top:352px" width="10" height="11" viewBox="0 0 10 11"><path d="M0.5 10.5h9v-6.5l-4.5-3.5l-4.5 3.5z" fill="#fff" stroke="#b4b4b4"/><path d="M2.5 6.5h5" stroke="#a0a0a0"/></svg>
<svg class="a" style="left:405px;top:399px" width="10" height="11" viewBox="0 0 10 11"><path d="M0.5 0.5h9v6.5l-4.5 3.5l-4.5-3.5z" fill="#fff" stroke="#b4b4b4"/><path d="M2.5 3.5h5" stroke="#a0a0a0"/></svg>
<svg class="a" style="left:405px;top:504px" width="10" height="11" viewBox="0 0 10 11"><path d="M0.5 0.5h9v6.5l-4.5 3.5l-4.5-3.5z" fill="#fff" stroke="#b4b4b4"/><path d="M2.5 3.5h5" stroke="#a0a0a0"/></svg>
<svg class="a" style="left:405px;top:547px" width="10" height="11" viewBox="0 0 10 11"><path d="M0.5 10.5h9v-6.5l-4.5-3.5l-4.5 3.5z" fill="#fff" stroke="#b4b4b4"/><path d="M2.5 6.5h5" stroke="#a0a0a0"/></svg>
<svg class="a" style="left:405px;top:562px" width="10" height="11" viewBox="0 0 10 11"><path d="M0.5 10.5h9v-6.5l-4.5-3.5l-4.5 3.5z" fill="#fff" stroke="#b4b4b4"/><path d="M2.5 6.5h5" stroke="#a0a0a0"/></svg>
<svg class="a" style="left:405px;top:609px" width="10" height="11" viewBox="0 0 10 11"><path d="M0.5 0.5h9v6.5l-4.5 3.5l-4.5-3.5z" fill="#fff" stroke="#b4b4b4"/><path d="M2.5 3.5h5" stroke="#a0a0a0"/></svg>
<div class="a" style="left:1820px;top:83px;width:10px;height:10px;background:#f0c800;"></div>
<div class="a" style="left:1818px;top:118px;width:14px;height:2px;background:#d5c9a0;"></div>
<div class="a" style="left:1818px;top:124px;width:14px;height:1px;background:#2b4fa8;"></div>
<div class="a" style="left:1818px;top:126px;width:14px;height:1px;background:#b9a8f0;"></div>
<div class="a" style="left:1818px;top:465px;width:14px;height:2px;background:#a59cf2;"></div>
<div class="a" style="left:1818px;top:587px;width:14px;height:2px;background:#d5c9a0;"></div>
<div class="a" style="left:1818px;top:598px;width:14px;height:2px;background:#d5c9a0;"></div>
<div class="a" style="left:1418px;top:28px;width:168px;height:19px;background:linear-gradient(#f7f7f7,#e3e3e3);border:1px solid #a3a3a3;border-radius:3px;box-sizing:border-box;"></div>
<svg class="a" style="left:1424px;top:30px" width="16" height="16" viewBox="0 0 16 16"><rect x="0" y="0" width="14" height="14" rx="1.5" fill="#3a7c50"/><text x="6.8" y="10.5" font-size="11" font-family="Liberation Sans" font-weight="bold" fill="#fff" text-anchor="middle" letter-spacing="-0.8">dj</text><circle cx="13" cy="13" r="2.2" fill="#20d420"/></svg>
<div class="t" style="left:1442px;top:30px;font-size:15px;color:#000;font-weight:normal;font-style:normal;font-family:'Liberation Sans', sans-serif;letter-spacing:0.487px;">Docker: runserver</div>
<svg class="a" style="left:1573px;top:36px" width="8" height="5" viewBox="0 0 8 5"><path d="M0 0h7.5l-3.75 4z" fill="#8c8c8c"/></svg>
<svg class="a" style="left:1595px;top:30px" width="12" height="15" viewBox="0 0 12 15"><path d="M0 0L11 7L0 14z" fill="#3fae4f"/></svg>
<svg class="a" style="left:1617px;top:29px" width="18" height="18" viewBox="0 0 18 18"><path d="M1.5 1.5L3.5 3.5M5.5 0.8v2.2M9 1.5L8 3.5M1.5 15L3.5 13M5.5 15.5v-2.2M9 15L8 13" stroke="#555" stroke-width="1.1"/><path d="M10.2 3.5A5.2 5.2 0 1 0 10.2 12.8A7 7 0 0 1 10.2 3.5z" fill="#3dae4f"/><ellipse cx="11.3" cy="8.2" rx="1.8" ry="3" fill="#666"/><path d="M12 5.5Q12.8 3.8 14.8 3.8M12 11Q12.8 12.5 14 13" fill="none" stroke="#555" stroke-width="1.1"/><circle cx="14.5" cy="14.8" r="2.2" fill="#22e022"/></svg>
<svg class="a" style="left:1642px;top:29px" width="16" height="16" viewBox="0 0 16 16"><path d="M0.5 2.8L6.2 8L0.5 13.2z" fill="#3dae4f"/><circle cx="4.0" cy="5.0" r="0.85" fill="#505050"/><circle cx="4.0" cy="9.0" r="0.85" fill="#505050"/><circle cx="6.0" cy="3.0" r="0.85" fill="#505050"/><circle cx="6.0" cy="7.0" r="0.85" fill="#505050"/><circle cx="6.0" cy="11.0" r="0.85" fill="#505050"/><circle cx="8.0" cy="5.0" r="0.85" fill="#505050"/><circle cx="8.0" cy="9.0" r="0.85" fill="#505050"/><circle cx="8.0" cy="13.0" r="0.85" fill="#505050"/><circle cx="10.0" cy="3.0" r="0.85" fill="#505050"/><circle cx="10.0" cy="7.0" r="0.85" fill="#505050"/><circle cx="10.0" cy="11.0" r="0.85" fill="#505050"/><circle cx="12.0" cy="5.0" r="0.85" fill="#505050"/><circle cx="12.0" cy="9.0" r="0.85" fill="#505050"/><circle cx="12.0" cy="13.0" r="0.85" fill="#505050"/><circle cx="14.0" cy="3.0" r="0.85" fill="#505050"/><circle cx="14.0" cy="7.0" r="0.85" fill="#505050"/><circle cx="14.0" cy="11.0" r="0.85" fill="#505050"/></svg>
<svg class="a" style="left:1667px;top:30px" width="16" height="16" viewBox="0 0 16 16"><circle cx="6.5" cy="7" r="6" fill="none" stroke="#7c7c7c" stroke-width="1.1"/><path d="M3 4.5l3 2.5l-3 2.5" fill="none" stroke="#555" stroke-width="1.1"/><path d="M8 4.5L15 9.5L8 14.5z" fill="#3fae4f"/></svg>
<svg class="a" style="left:1692px;top:31px" width="16" height="15" viewBox="0 0 16 15"><path d="M0 1h15" stroke="#c08c4a" stroke-width="2"/><path d="M0 4.5h11" stroke="#3c8fd0" stroke-width="2"/><path d="M0 7.5h7" stroke="#c08c4a" stroke-width="2"/><path d="M0 10.5h7" stroke="#3c8fd0" stroke-width="2"/><path d="M8.5 4.5L15.5 9.5L8.5 14.5z" fill="#4aa95a"/></svg>
<div class="a" style="left:1716px;top:27px;width:1px;height:22px;background:#c8c8c8;"></div>
<svg class="a" style="left:1724px;top:30px" width="15" height="16" viewBox="0 0 15 16"><text x="7.5" y="6.2" font-size="7.8" font-family="Liberation Sans" fill="#5a5a5a" text-anchor="middle">VCS</text><path d="M3.5 7h4v3.5h3L5.5 15.5L0.5 10.5h3z" fill="#3d8cc4" transform="translate(1.5,0)"/></svg>
<svg class="a" style="left:1749px;top:30px" width="15" height="16" viewBox="0 0 15 16"><text x="7.5" y="6.2" font-size="7.8" font-family="Liberation Sans" fill="#5a5a5a" text-anchor="middle">VCS</text><path d="M6.5 7L11.5 12H8.5v3.5h-4V12H1.5z" fill="#3ea24d" transform="translate(1,0)"/></svg>
<svg class="a" style="left:1774px;top:28px" width="16" height="17" viewBox="0 0 16 17"><rect x="1" y="3.5" width="8" height="9" fill="none" stroke="#6a6a6a" stroke-width="1.6"/><path d="M4 14.5h7.5V8" fill="none" stroke="#7a7a7a" stroke-width="1.6"/><circle cx="10.5" cy="5.5" r="4.5" fill="#a6d8f7" stroke="#5eaee8" stroke-width="1"/><path d="M10.5 3v2.8h2.2" stroke="#333" stroke-width="0.9" fill="none"/></svg>
<svg class="a" style="left:1799px;top:30px" width="15" height="14" viewBox="0 0 15 14"><path d="M0.5 5L5 0.5V9.5z" fill="#777"/><path d="M4 5h5.5a4 4 0 0 1 0 8h-6" fill="none" stroke="#777" stroke-width="2.3"/></svg>
<div class="a" style="left:1822px;top:27px;width:1px;height:22px;background:#c8c8c8;"></div>
<svg class="a" style="left:1835px;top:30px" width="15" height="15" viewBox="0 0 15 15"><circle cx="6" cy="6" r="4.8" fill="none" stroke="#6e6e6e" stroke-width="2"/><path d="M9.5 9.5L14 14" stroke="#6e6e6e" stroke-width="2.5"/></svg>
<div class="t" style="left:12px;top:95px;font-size:14px;color:#000;letter-spacing:-1.128px;transform:translate(-50%,-50%) rotate(-90deg);"><span style="text-decoration:underline">1</span>: Project</div>
<svg class="a" style="left:5px;top:123px" width="13" height="12" viewBox="0 0 13 12"><path d="M0 0h5l1 2h5v7h-11z" fill="#e39b3c"/><rect x="5" y="5" width="8" height="7" fill="#555"/><path d="M7 9.5h4" stroke="#fff"/></svg>
<div class="t" style="left:12px;top:197px;font-size:14px;color:#000;letter-spacing:-0.490px;transform:translate(-50%,-50%) rotate(-90deg);"><span style="text-decoration:underline">7</span>: Structure</div>
<svg class="a" style="left:5px;top:233px" width="14" height="14" viewBox="0 0 14 14"><path d="M3 3L10.5 3M3 3L7 10M10.5 3L7 10" stroke="#777" stroke-width="1"/><circle cx="3" cy="3" r="2.6" fill="#4a90d0"/><circle cx="11" cy="3" r="2.6" fill="#e05a50"/><circle cx="7" cy="11" r="2.6" fill="#c08a4a"/></svg>
<div class="t" style="left:12px;top:952px;font-size:14px;color:#000;letter-spacing:-1.287px;transform:translate(-50%,-50%) rotate(-90deg);"><span style="text-decoration:underline">2</span>: Favorites</div>
<svg class="a" style="left:5px;top:986px" width="13" height="13" viewBox="0 0 13 13"><path d="M6.5 0.5L8.3 4.6L12.7 4.9L9.3 7.8L10.4 12.3L6.5 9.9L2.6 12.3L3.7 7.8L0.3 4.9L4.7 4.6z" fill="#e3962c"/></svg>
<svg class="a" style="left:1837px;top:63px" width="14" height="13" viewBox="0 0 14 13"><path d="M0.5 0.5h5v2" fill="none" stroke="#4d8cc2" stroke-width="1.4"/><path d="M0.7 0.7v8" stroke="#4d8cc2" stroke-width="1.4"/><rect x="4.5" y="3.5" width="9" height="9" fill="#fff" stroke="#8a8a8a"/><path d="M4.5 6.5h9M4.5 9.5h9M7.5 3.5v9M10.5 3.5v9" stroke="#8a8a8a"/></svg>
<div class="t" style="left:1844px;top:109px;font-size:14px;color:#000;letter-spacing:-0.348px;transform:translate(-50%,-50%) rotate(90deg);">Database</div>
<div class="a" style="left:23px;top:627px;width:1809px;height:1px;background:#a8afbb;"></div>
<div class="a" style="left:23px;top:628px;width:1809px;height:24px;background:linear-gradient(#cbd3e3,#c3cbdc);"></div>
<div class="a" style="left:23px;top:652px;width:1809px;height:1px;background:#808692;"></div>
<div class="t" style="left:28px;top:632px;font-size:14px;color:#000;font-weight:normal;font-style:normal;font-family:'Liberation Sans', sans-serif;letter-spacing:-0.316px;">Debug</div>
<svg class="a" style="left:72px;top:633px" width="16" height="16" viewBox="0 0 16 16"><rect x="0" y="0" width="14" height="14" rx="1.5" fill="#3a7c50"/><text x="6.8" y="10.5" font-size="11" font-family="Liberation Sans" font-weight="bold" fill="#fff" text-anchor="middle" letter-spacing="-0.8">dj</text><circle cx="13" cy="13" r="2.2" fill="#20d420"/></svg>
<div class="t" style="left:91px;top:632px;font-size:14px;color:#000;font-weight:normal;font-style:normal;font-family:'Liberation Sans', sans-serif;letter-spacing:-0.142px;">Docker: runserver</div>
<svg class="a" style="left:1785px;top:633px" width="17" height="13" viewBox="0 0 17 13"><circle cx="6" cy="6.5" r="3" fill="none" stroke="#666" stroke-width="2.6"/><path d="M6 0.5v2.5M6 10v2.5M0 6.5h2.5M9.5 6.5h2.5M2 2.5l1.8 1.8M8.2 8.7L10 10.5M10 2.5L8.2 4.3M2 10.5l1.8-1.8" stroke="#666" stroke-width="1.8"/><path d="M13 6h4l-2 2.5z" fill="#666"/></svg>
<svg class="a" style="left:1814px;top:633px" width="12" height="13" viewBox="0 0 12 13"><path d="M5.5 0v8M2.5 5l3 3l3-3" fill="none" stroke="#666" stroke-width="1.3"/><rect x="0.5" y="9.5" width="10" height="2.5" fill="#fff" stroke="#666"/><rect x="0.5" y="9.5" width="5" height="2.5" fill="#666"/></svg>
<div class="a" style="left:23px;top:653px;width:1809px;height:359px;background:#e7e7e7;"></div>
<div class="a" style="left:52px;top:653px;width:1px;height:359px;background:#a9a9a9;"></div>
<div class="a" style="left:53px;top:653px;width:71px;height:31px;background:#ffffff;"></div>
<div class="a" style="left:124px;top:653px;width:96px;height:28px;background:#d6d6d6;"></div>
<div class="a" style="left:124px;top:653px;width:1px;height:28px;background:#a9a9a9;"></div>
<div class="a" style="left:220px;top:653px;width:1px;height:28px;background:#a9a9a9;"></div>
<div class="a" style="left:220px;top:680px;width:1612px;height:1px;background:#9a9a9a;"></div>
<div class="a" style="left:124px;top:680px;width:96px;height:1px;background:#a9a9a9;"></div>
<div class="a" style="left:53px;top:681px;width:1779px;height:3px;background:#ffffff;"></div>
<div class="a" style="left:53px;top:681px;width:71px;height:3px;background:#ffffff;"></div>
<div class="a" style="left:53px;top:684px;width:1779px;height:1px;background:#8a8f99;"></div>
<div class="t" style="left:59px;top:658px;font-size:14px;color:#000;font-weight:normal;font-style:normal;font-family:'Liberation Sans', sans-serif;letter-spacing:0.071px;">Debugger</div>
<svg class="a" style="left:131px;top:659px" width="14" height="14" viewBox="0 0 14 14"><rect x="0" y="0" width="14" height="14" fill="#6e6e6e"/><rect x="0" y="0" width="14" height="3" fill="#5b9fd6"/><rect x="3" y="4" width="8" height="7" fill="#b7dcf5"/><path d="M4.5 6h5M4.5 8h3M4.5 10h4" stroke="#444" stroke-width="0.9"/></svg>
<div class="t" style="left:149px;top:658px;font-size:14px;color:#555;font-weight:normal;font-style:normal;font-family:'Liberation Sans', sans-serif;letter-spacing:-0.229px;">Console</div>
<svg class="a" style="left:205px;top:663px" width="13" height="8" viewBox="0 0 13 8"><path d="M0 5h8M5.5 2.5L8 5L5.5 7.5" fill="none" stroke="#6e6e6e" stroke-width="1.2"/><rect x="10" y="0" width="3" height="3" fill="#6e6e6e"/></svg>
<svg class="a" style="left:225px;top:658px" width="16" height="16" viewBox="0 0 16 16"><path d="M0.5 1L7 6.5L0.5 12z" fill="#e06050"/><path d="M8 5h7M8 8.5h7" stroke="#707070" stroke-width="1.6"/><path d="M3 12h12M3 15h12" stroke="#4a88b8" stroke-width="1.8"/></svg>
<div class="a" style="left:249px;top:657px;width:1px;height:20px;background:#c6c6c6;"></div>
<svg class="a" style="left:257px;top:658px" width="15" height="16" viewBox="0 0 15 16"><rect x="0" y="13.5" width="14" height="2" fill="#7a7a7a"/><rect x="0" y="1" width="14" height="2" fill="#7a7a7a"/><rect x="5" y="4" width="4" height="4" fill="#47a0d8"/><path d="M1.5 7.5h11L7 12.5z" fill="#47a0d8"/></svg>
<svg class="a" style="left:282px;top:658px" width="15" height="16" viewBox="0 0 15 16"><rect x="0" y="13.5" width="14" height="2" fill="#7a7a7a"/><path d="M0.5 3L3 0.5L9.5 7L12 4.5V12H4.5L7 9.5z" fill="#47a0d8"/></svg>
<svg class="a" style="left:307px;top:658px" width="15" height="16" viewBox="0 0 15 16"><rect x="0" y="13.5" width="14" height="2" fill="#7a7a7a"/><path d="M0.5 3L3 0.5L9.5 7L12 4.5V12H4.5L7 9.5z" fill="#47a0d8"/><rect x="0" y="6.5" width="3" height="2" fill="#e06050"/><rect x="10.5" y="6.5" width="3.5" height="2" fill="#e06050"/></svg>
<svg class="a" style="left:332px;top:658px" width="15" height="16" viewBox="0 0 15 16"><rect x="0" y="13.5" width="14" height="2" fill="#7a7a7a"/><path d="M0.5 2.5Q6 1 9.5 6.5L12 4.5V12H4.5L7 9.5Q4 5.5 0.5 5z" fill="#9a9a9a"/></svg>
<svg class="a" style="left:357px;top:658px" width="15" height="16" viewBox="0 0 15 16"><rect x="0" y="13.5" width="14" height="2" fill="#7a7a7a"/><path d="M1.5 10L4 12.5L10.5 6L13 8.5V1H5.5L8 3.5z" fill="#47a0d8"/></svg>
<svg class="a" style="left:382px;top:658px" width="16" height="16" viewBox="0 0 16 16"><path d="M0.5 2.5L2.5 0.5L7 5L9 3V9H3L5 7z" fill="#47a0d8"/><path d="M8 5.5h5M10.5 5.5v9M8 14.5h5" stroke="#333" stroke-width="1.3"/></svg>
<div class="a" style="left:405px;top:657px;width:1px;height:20px;background:#c6c6c6;"></div>
<svg class="a" style="left:414px;top:659px" width="14" height="13" viewBox="0 0 14 13"><rect x="0.5" y="0.5" width="13" height="12" fill="#fff" stroke="#7a7a7a"/><rect x="2" y="2" width="10" height="2.5" fill="#4a90c8"/><path d="M2.5 7h2M6 7h2M2.5 9.5h2M6 9.5h2" stroke="#7a7a7a" stroke-width="1"/><path d="M9 7h2.5" stroke="#e0574d" stroke-width="1"/><path d="M9 9.5h2.5" stroke="#3aa848" stroke-width="1"/></svg>
<svg class="a" style="left:29px;top:658px" width="16" height="16" viewBox="0 0 16 16"><path d="M2.5 9a5.5 5.5 0 0 1 9-4.5" fill="none" stroke="#3fa850" stroke-width="2.3"/><path d="M9 1.5L13.5 4.5L9.5 7.5z" fill="#3fa850"/><rect x="8" y="8" width="6.5" height="6.5" fill="#7c7c7c"/><path d="M2.5 9a5.5 5.5 0 0 0 5 5" fill="none" stroke="#3fa850" stroke-width="2.3"/></svg>
<div class="a" style="left:27px;top:682px;width:22px;height:1px;background:#c8c8c8;"></div>
<svg class="a" style="left:30px;top:690px" width="16" height="15" viewBox="0 0 16 15"><path d="M0 1h3M0 3h3M0 5h3M0 7h3M0 9h3M0 11h3M0 13h3" stroke="#555" stroke-width="0.8"/><path d="M4 0.5L15 7.5L4 14.5z" fill="#3fae4f"/></svg>
<svg class="a" style="left:32px;top:716px" width="10" height="12" viewBox="0 0 10 12"><rect x="0" y="0" width="3.5" height="12" fill="#8a8a8a"/><rect x="6.5" y="0" width="3.5" height="12" fill="#8a8a8a"/></svg>
<div class="a" style="left:31px;top:741px;width:12px;height:12px;background:#e0574d;"></div>
<div class="a" style="left:27px;top:764px;width:22px;height:1px;background:#c8c8c8;"></div>
<svg class="a" style="left:29px;top:770px" width="16" height="16" viewBox="0 0 16 16"><circle cx="5" cy="5" r="4" fill="#e0574d"/><circle cx="5" cy="11" r="4.3" fill="#e0574d"/><circle cx="13" cy="5.5" r="1.6" fill="none" stroke="#7a7a7a"/><circle cx="13" cy="10.5" r="1.6" fill="none" stroke="#7a7a7a"/></svg>
<svg class="a" style="left:30px;top:796px" width="14" height="14" viewBox="0 0 14 14"><circle cx="7" cy="7" r="6.2" fill="#e0574d" stroke="#7a7a7a" stroke-width="1.2"/><path d="M3 11L11 3" stroke="#fff" stroke-width="2"/></svg>
<div class="a" style="left:27px;top:820px;width:22px;height:1px;background:#c8c8c8;"></div>
<svg class="a" style="left:30px;top:826px" width="14" height="15" viewBox="0 0 14 15"><rect x="0" y="0" width="6" height="5" fill="#3d8ad0"/><rect x="7.5" y="0" width="6" height="5" fill="none" stroke="#555"/><rect x="0.5" y="7" width="13" height="3" fill="none" stroke="#555"/><rect x="0.5" y="11.5" width="13" height="3" fill="none" stroke="#555"/></svg>
<svg class="a" style="left:30px;top:852px" width="16" height="16" viewBox="0 0 16 16"><circle cx="6.5" cy="6.5" r="3" fill="none" stroke="#3d8ad0" stroke-width="2.8"/><path d="M6.5 0v2.8M6.5 10.2V13M0 6.5h2.8M10.2 6.5H13M2 2l2 2M9 9l2 2M11 2L9 4M2 11l2-2" stroke="#3d8ad0" stroke-width="2"/><path d="M11 13h4l-2 2.5z" fill="#555"/></svg>
<div class="a" style="left:27px;top:875px;width:22px;height:1px;background:#c8c8c8;"></div>
<svg class="a" style="left:29px;top:882px" width="16" height="16" viewBox="0 0 16 16"><path d="M0.5 15.5L6 10" stroke="#555" stroke-width="1.3"/><ellipse cx="10" cy="6" rx="4.5" ry="3.2" transform="rotate(-45 10 6)" fill="#b06cc0"/><path d="M5 6l5 5" stroke="#b06cc0" stroke-width="2.5"/></svg>
<svg class="a" style="left:31px;top:909px" width="13" height="13" viewBox="0 0 13 13"><path d="M1 1L12 12M12 1L1 12" stroke="#e0574d" stroke-width="2.6"/></svg>
<div class="t" style="left:30px;top:929px;font-size:19px;color:#3d8ad0;font-weight:bold;font-style:normal;font-family:'Liberation Sans', sans-serif;">?</div>
<div class="a" style="left:53px;top:685px;width:355px;height:28px;background:#c6cedf;"></div>
<div class="a" style="left:53px;top:713px;width:355px;height:1px;background:#7c818b;"></div>
<svg class="a" style="left:58px;top:689px" width="14" height="15" viewBox="0 0 14 15"><rect x="0.7" y="0.7" width="10" height="8.5" fill="#fff" stroke="#8c8c8c" stroke-width="1.3"/><rect x="1.7" y="2.7" width="10" height="8.5" fill="#fff" stroke="#8c8c8c" stroke-width="1.3"/><rect x="2.7" y="4.7" width="10" height="9" fill="#fff" stroke="#8c8c8c" stroke-width="1.4"/><rect x="4.3" y="6.3" width="7" height="6" fill="#bfe1f7"/><path d="M6.5 6.5L4.8 7.8L6.5 9.1M8.8 9.9L10.5 11.2L8.8 12.5" fill="none" stroke="#444" stroke-width="1.2"/></svg>
<div class="t" style="left:76px;top:689px;font-size:14px;color:#000;font-weight:normal;font-style:normal;font-family:'Liberation Sans', sans-serif;letter-spacing:-0.691px;">Frames</div>
<svg class="a" style="left:393px;top:694px" width="13" height="8" viewBox="0 0 13 8"><path d="M0 5h8M5.5 2.5L8 5L5.5 7.5" fill="none" stroke="#6e6e6e" stroke-width="1.2"/><rect x="10" y="0" width="3" height="3" fill="#6e6e6e"/></svg>
<div class="a" style="left:409px;top:685px;width:1067px;height:28px;background:#c6cedf;"></div>
<div class="a" style="left:409px;top:713px;width:1067px;height:1px;background:#7c818b;"></div>
<div class="a" style="left:408px;top:685px;width:1px;height:327px;background:#9a9a9a;"></div>
<svg class="a" style="left:415px;top:691px" width="12" height="12" viewBox="0 0 12 12"><rect x="0" y="0" width="12" height="2.6" fill="#c0914f"/><rect x="0" y="4.7" width="12" height="2.6" fill="#c0914f"/><rect x="0" y="9.4" width="12" height="2.6" fill="#c0914f"/></svg>
<div class="t" style="left:432px;top:689px;font-size:14px;color:#000;font-weight:normal;font-style:normal;font-family:'Liberation Sans', sans-serif;letter-spacing:-0.041px;">Variables</div>
<svg class="a" style="left:1462px;top:694px" width="13" height="8" viewBox="0 0 13 8"><path d="M0 5h8M5.5 2.5L8 5L5.5 7.5" fill="none" stroke="#6e6e6e" stroke-width="1.2"/><rect x="10" y="0" width="3" height="3" fill="#6e6e6e"/></svg>
<div class="a" style="left:1477px;top:685px;width:355px;height:28px;background:#c6cedf;"></div>
<div class="a" style="left:1477px;top:713px;width:355px;height:1px;background:#7c818b;"></div>
<div class="a" style="left:1476px;top:685px;width:1px;height:327px;background:#9a9a9a;"></div>
<svg class="a" style="left:1481px;top:690px" width="16" height="15" viewBox="0 0 16 15"><rect x="1" y="0.5" width="14" height="12" fill="#c9c9c9" stroke="#8a8a8a" stroke-width="0.8"/><rect x="1" y="0" width="14" height="2.5" fill="#5b9fd6"/><path d="M3.5 10.5L7 3.5M9 10.5L12.5 3.5" stroke="#555" stroke-width="0.9"/><circle cx="3.5" cy="11.5" r="2.8" fill="#70c860" stroke="#4a9a40" stroke-width="0.6"/><circle cx="8.5" cy="12" r="2.8" fill="#70c860" stroke="#4a9a40" stroke-width="0.6"/></svg>
<div class="t" style="left:1500px;top:689px;font-size:14px;color:#000;font-weight:normal;font-style:normal;font-family:'Liberation Sans', sans-serif;letter-spacing:0.008px;">Watches</div>
<svg class="a" style="left:1816px;top:694px" width="13" height="8" viewBox="0 0 13 8"><path d="M0 5h8M5.5 2.5L8 5L5.5 7.5" fill="none" stroke="#6e6e6e" stroke-width="1.2"/><rect x="10" y="0" width="3" height="3" fill="#6e6e6e"/></svg>
<div class="a" style="left:53px;top:714px;width:355px;height:297px;background:#ffffff;"></div>
<div class="a" style="left:54px;top:715px;width:298px;height:27px;background:linear-gradient(#ececec,#e2e2e2);border:1px solid #b4b4b4;border-radius:3px;box-sizing:border-box;"></div>
<div class="a" style="left:327px;top:715px;width:25px;height:27px;background:#3b78d3;border-radius:0 3px 3px 0;"></div>
<svg class="a" style="left:334px;top:725px" width="10" height="6" viewBox="0 0 10 6"><path d="M0 0h10l-5 5.5z" fill="#fff"/></svg>
<svg class="a" style="left:62px;top:721px" width="10" height="14" viewBox="0 0 10 14"><rect x="0" y="0" width="10" height="2" rx="0.8" fill="#4a4a4a"/><rect x="0" y="12" width="10" height="2" rx="0.8" fill="#4a4a4a"/><rect x="1" y="2" width="8" height="10" fill="#e59a2a"/><path d="M1 4.5h8M1 7h8M1 9.5h8" stroke="#6b4a18" stroke-width="1"/><path d="M3 3.5h2M3 6h2M3 8.5h2" stroke="#f5d070" stroke-width="0.9"/></svg>
<div class="t" style="left:79px;top:719px;font-size:15px;color:#000;font-weight:normal;font-style:normal;font-family:'Liberation Sans', sans-serif;letter-spacing:0.328px;">MainThread</div>
<div class="a" style="left:356px;top:718px;width:1px;height:21px;background:#c8c8c8;"></div>
<svg class="a" style="left:365px;top:720px" width="12" height="12" viewBox="0 0 12 12"><path d="M6 0L12 6H8v6H4V6H0z" fill="#8a8a8a"/></svg>
<svg class="a" style="left:389px;top:720px" width="12" height="12" viewBox="0 0 12 12"><path d="M6 12L12 6H8V0H4v6H0z" fill="#3d8ad0"/></svg>
<div class="a" style="left:53px;top:743px;width:355px;height:22px;background:#3875d7;border:1px dotted #000;box-sizing:border-box;"></div>
<svg class="a" style="left:56px;top:747px" width="14" height="15" viewBox="0 0 14 15"><rect x="0.7" y="0.7" width="10" height="8.5" fill="#fff" stroke="#8aa7d8" stroke-width="1.3"/><rect x="1.7" y="2.7" width="10" height="8.5" fill="#fff" stroke="#8aa7d8" stroke-width="1.3"/><rect x="2.7" y="4.7" width="10" height="9" fill="#fff" stroke="#8aa7d8" stroke-width="1.4"/><rect x="4.3" y="6.3" width="7" height="6" fill="#5d95e0"/><path d="M6.5 6.5L4.8 7.8L6.5 9.1M8.8 9.9L10.5 11.2L8.8 12.5" fill="none" stroke="#444" stroke-width="1.2"/></svg>
<div class="t" style="left:74px;top:745px;font-size:15px;color:#ffffff;font-weight:normal;font-style:normal;font-family:'Liberation Sans', sans-serif;letter-spacing:0.184px;">&lt;module&gt;, common.py:15</div>
<svg class="a" style="left:56px;top:769px" width="14" height="15" viewBox="0 0 14 15"><rect x="0.7" y="0.7" width="10" height="8.5" fill="#fff" stroke="#8c8c8c" stroke-width="1.3"/><rect x="1.7" y="2.7" width="10" height="8.5" fill="#fff" stroke="#8c8c8c" stroke-width="1.3"/><rect x="2.7" y="4.7" width="10" height="9" fill="#fff" stroke="#8c8c8c" stroke-width="1.4"/><rect x="4.3" y="6.3" width="7" height="6" fill="#bfe1f7"/><path d="M6.5 6.5L4.8 7.8L6.5 9.1M8.8 9.9L10.5 11.2L8.8 12.5" fill="none" stroke="#444" stroke-width="1.2"/></svg>
<div class="t" style="left:74px;top:767px;font-size:15px;color:#000;font-weight:normal;font-style:normal;font-family:'Liberation Sans', sans-serif;letter-spacing:0.152px;">&lt;module&gt;, local.py:11</div>
<div class="a" style="left:53px;top:787px;width:355px;height:22px;background:#fffee4;"></div>
<svg class="a" style="left:56px;top:791px" width="14" height="15" viewBox="0 0 14 15"><rect x="0.7" y="0.7" width="10" height="8.5" fill="#fff" stroke="#8c8c8c" stroke-width="1.3"/><rect x="1.7" y="2.7" width="10" height="8.5" fill="#fff" stroke="#8c8c8c" stroke-width="1.3"/><rect x="2.7" y="4.7" width="10" height="9" fill="#fff" stroke="#8c8c8c" stroke-width="1.4"/><rect x="4.3" y="6.3" width="7" height="6" fill="#bfe1f7"/><path d="M6.5 6.5L4.8 7.8L6.5 9.1M8.8 9.9L10.5 11.2L8.8 12.5" fill="none" stroke="#444" stroke-width="1.2"/></svg>
<div class="t" style="left:74px;top:789px;font-size:15px;color:#adadad;font-weight:normal;font-style:normal;font-family:'Liberation Sans', sans-serif;letter-spacing:0.033px;">import_module, __init__.py:37</div>
<div class="a" style="left:53px;top:809px;width:355px;height:22px;background:#fffee4;"></div>
<svg class="a" style="left:56px;top:813px" width="14" height="15" viewBox="0 0 14 15"><rect x="0.7" y="0.7" width="10" height="8.5" fill="#fff" stroke="#8c8c8c" stroke-width="1.3"/><rect x="1.7" y="2.7" width="10" height="8.5" fill="#fff" stroke="#8c8c8c" stroke-width="1.3"/><rect x="2.7" y="4.7" width="10" height="9" fill="#fff" stroke="#8c8c8c" stroke-width="1.4"/><rect x="4.3" y="6.3" width="7" height="6" fill="#bfe1f7"/><path d="M6.5 6.5L4.8 7.8L6.5 9.1M8.8 9.9L10.5 11.2L8.8 12.5" fill="none" stroke="#444" stroke-width="1.2"/></svg>
<div class="t" style="left:74px;top:811px;font-size:15px;color:#adadad;font-weight:normal;font-style:normal;font-family:'Liberation Sans', sans-serif;letter-spacing:-0.387px;">__init__, __init__.py:99</div>
<div class="a" style="left:53px;top:831px;width:355px;height:22px;background:#fffee4;"></div>
<svg class="a" style="left:56px;top:835px" width="14" height="15" viewBox="0 0 14 15"><rect x="0.7" y="0.7" width="10" height="8.5" fill="#fff" stroke="#8c8c8c" stroke-width="1.3"/><rect x="1.7" y="2.7" width="10" height="8.5" fill="#fff" stroke="#8c8c8c" stroke-width="1.3"/><rect x="2.7" y="4.7" width="10" height="9" fill="#fff" stroke="#8c8c8c" stroke-width="1.4"/><rect x="4.3" y="6.3" width="7" height="6" fill="#bfe1f7"/><path d="M6.5 6.5L4.8 7.8L6.5 9.1M8.8 9.9L10.5 11.2L8.8 12.5" fill="none" stroke="#444" stroke-width="1.2"/></svg>
<div class="t" style="left:74px;top:833px;font-size:15px;color:#adadad;font-weight:normal;font-style:normal;font-family:'Liberation Sans', sans-serif;letter-spacing:-0.151px;">_setup, __init__.py:43</div>
<div class="a" style="left:53px;top:853px;width:355px;height:22px;background:#fffee4;"></div>
<svg class="a" style="left:56px;top:857px" width="14" height="15" viewBox="0 0 14 15"><rect x="0.7" y="0.7" width="10" height="8.5" fill="#fff" stroke="#8c8c8c" stroke-width="1.3"/><rect x="1.7" y="2.7" width="10" height="8.5" fill="#fff" stroke="#8c8c8c" stroke-width="1.3"/><rect x="2.7" y="4.7" width="10" height="9" fill="#fff" stroke="#8c8c8c" stroke-width="1.4"/><rect x="4.3" y="6.3" width="7" height="6" fill="#bfe1f7"/><path d="M6.5 6.5L4.8 7.8L6.5 9.1M8.8 9.9L10.5 11.2L8.8 12.5" fill="none" stroke="#444" stroke-width="1.2"/></svg>
<div class="t" style="left:74px;top:855px;font-size:15px;color:#adadad;font-weight:normal;font-style:normal;font-family:'Liberation Sans', sans-serif;letter-spacing:-0.140px;">__getattr__, __init__.py:55</div>
<div class="a" style="left:53px;top:875px;width:355px;height:22px;background:#fffee4;"></div>
<svg class="a" style="left:56px;top:879px" width="14" height="15" viewBox="0 0 14 15"><rect x="0.7" y="0.7" width="10" height="8.5" fill="#fff" stroke="#8c8c8c" stroke-width="1.3"/><rect x="1.7" y="2.7" width="10" height="8.5" fill="#fff" stroke="#8c8c8c" stroke-width="1.3"/><rect x="2.7" y="4.7" width="10" height="9" fill="#fff" stroke="#8c8c8c" stroke-width="1.4"/><rect x="4.3" y="6.3" width="7" height="6" fill="#bfe1f7"/><path d="M6.5 6.5L4.8 7.8L6.5 9.1M8.8 9.9L10.5 11.2L8.8 12.5" fill="none" stroke="#444" stroke-width="1.2"/></svg>
<div class="t" style="left:74px;top:877px;font-size:15px;color:#adadad;font-weight:normal;font-style:normal;font-family:'Liberation Sans', sans-serif;letter-spacing:-0.001px;">execute, __init__.py:302</div>
<div class="a" style="left:53px;top:897px;width:355px;height:22px;background:#fffee4;"></div>
<svg class="a" style="left:56px;top:901px" width="14" height="15" viewBox="0 0 14 15"><rect x="0.7" y="0.7" width="10" height="8.5" fill="#fff" stroke="#8c8c8c" stroke-width="1.3"/><rect x="1.7" y="2.7" width="10" height="8.5" fill="#fff" stroke="#8c8c8c" stroke-width="1.3"/><rect x="2.7" y="4.7" width="10" height="9" fill="#fff" stroke="#8c8c8c" stroke-width="1.4"/><rect x="4.3" y="6.3" width="7" height="6" fill="#bfe1f7"/><path d="M6.5 6.5L4.8 7.8L6.5 9.1M8.8 9.9L10.5 11.2L8.8 12.5" fill="none" stroke="#444" stroke-width="1.2"/></svg>
<div class="t" style="left:74px;top:899px;font-size:15px;color:#adadad;font-weight:normal;font-style:normal;font-family:'Liberation Sans', sans-serif;letter-spacing:0.116px;">execute_from_command_line, __init__.py:353</div>
<svg class="a" style="left:56px;top:923px" width="14" height="15" viewBox="0 0 14 15"><rect x="0.7" y="0.7" width="10" height="8.5" fill="#fff" stroke="#8c8c8c" stroke-width="1.3"/><rect x="1.7" y="2.7" width="10" height="8.5" fill="#fff" stroke="#8c8c8c" stroke-width="1.3"/><rect x="2.7" y="4.7" width="10" height="9" fill="#fff" stroke="#8c8c8c" stroke-width="1.4"/><rect x="4.3" y="6.3" width="7" height="6" fill="#bfe1f7"/><path d="M6.5 6.5L4.8 7.8L6.5 9.1M8.8 9.9L10.5 11.2L8.8 12.5" fill="none" stroke="#444" stroke-width="1.2"/></svg>
<div class="t" style="left:74px;top:921px;font-size:15px;color:#000;font-weight:normal;font-style:normal;font-family:'Liberation Sans', sans-serif;letter-spacing:0.104px;">&lt;module&gt;, manage.py:10</div>
<div class="a" style="left:53px;top:941px;width:355px;height:22px;background:#fffee4;"></div>
<svg class="a" style="left:56px;top:945px" width="14" height="15" viewBox="0 0 14 15"><rect x="0.7" y="0.7" width="10" height="8.5" fill="#fff" stroke="#8c8c8c" stroke-width="1.3"/><rect x="1.7" y="2.7" width="10" height="8.5" fill="#fff" stroke="#8c8c8c" stroke-width="1.3"/><rect x="2.7" y="4.7" width="10" height="9" fill="#fff" stroke="#8c8c8c" stroke-width="1.4"/><rect x="4.3" y="6.3" width="7" height="6" fill="#bfe1f7"/><path d="M6.5 6.5L4.8 7.8L6.5 9.1M8.8 9.9L10.5 11.2L8.8 12.5" fill="none" stroke="#444" stroke-width="1.2"/></svg>
<div class="t" style="left:74px;top:943px;font-size:15px;color:#adadad;font-weight:normal;font-style:normal;font-family:'Liberation Sans', sans-serif;letter-spacing:0.094px;">run, pydevd.py:937</div>
<div class="a" style="left:53px;top:963px;width:355px;height:22px;background:#fffee4;"></div>
<svg class="a" style="left:56px;top:967px" width="14" height="15" viewBox="0 0 14 15"><rect x="0.7" y="0.7" width="10" height="8.5" fill="#fff" stroke="#8c8c8c" stroke-width="1.3"/><rect x="1.7" y="2.7" width="10" height="8.5" fill="#fff" stroke="#8c8c8c" stroke-width="1.3"/><rect x="2.7" y="4.7" width="10" height="9" fill="#fff" stroke="#8c8c8c" stroke-width="1.4"/><rect x="4.3" y="6.3" width="7" height="6" fill="#bfe1f7"/><path d="M6.5 6.5L4.8 7.8L6.5 9.1M8.8 9.9L10.5 11.2L8.8 12.5" fill="none" stroke="#444" stroke-width="1.2"/></svg>
<div class="t" style="left:74px;top:965px;font-size:15px;color:#adadad;font-weight:normal;font-style:normal;font-family:'Liberation Sans', sans-serif;letter-spacing:0.062px;">&lt;module&gt;, pydevd.py:1530</div>
<div class="a" style="left:409px;top:714px;width:1067px;height:297px;background:#ffffff;"></div>
<div class="a" style="left:409px;top:1001px;width:586px;height:10px;background:#b8b8b8;"></div>
<svg class="a" style="left:413px;top:721px" width="9" height="10" viewBox="0 0 9 10"><path d="M0 0L8 5L0 10z" fill="#a8a8a8"/></svg>
<svg class="a" style="left:433px;top:719px" width="12" height="12" viewBox="0 0 12 12"><rect x="0" y="0" width="12" height="2.6" fill="#c0914f"/><rect x="0" y="4.7" width="12" height="2.6" fill="#c0914f"/><rect x="0" y="9.4" width="12" height="2.6" fill="#c0914f"/></svg>
<div class="t" style="left:450px;top:716px;font-size:15px;color:#9b1c1c;font-weight:normal;font-style:normal;font-family:'Liberation Sans', sans-serif;letter-spacing:-0.115px;">__builtins__</div>
<div class="t" style="left:530px;top:716px;font-size:15px;color:#000;font-weight:normal;font-style:normal;font-family:'Liberation Sans', sans-serif;">=</div>
<div class="t" style="left:542px;top:716px;font-size:15px;color:#8f8f8f;font-weight:normal;font-style:normal;font-family:'Liberation Sans', sans-serif;letter-spacing:0.585px;">{dict}</div>
<div class="t" style="left:581px;top:716px;font-size:15px;color:#000;font-weight:normal;font-style:normal;font-family:'Liberation Sans', sans-serif;letter-spacing:0.295px;">{'bytearray': &lt;type 'bytearray'&gt;, 'IndexError': &lt;type 'exceptions.IndexError'&gt;, 'all': &lt;built-in function all&gt;, 'help': Type help() I</div>
<div class="t" style="left:1423px;top:716px;font-size:15px;color:#8f8f8f;font-weight:normal;font-style:normal;font-family:'Liberation Sans', sans-serif;letter-spacing:-0.258px;">...</div>
<div class="t" style="left:1439px;top:716px;font-size:15px;color:#8f8f8f;font-weight:normal;font-style:normal;font-family:'Liberation Sans', sans-serif;letter-spacing:0.917px;">View</div>
<svg class="a" style="left:433px;top:741px" width="12" height="12" viewBox="0 0 12 12"><rect x="0.5" y="0.5" width="11" height="11" fill="#fff" stroke="#6e6e6e"/><rect x="2.5" y="2" width="7" height="8" fill="#bfe0f7"/><text x="6" y="5.6" font-size="4.6" font-family="Liberation Sans" font-weight="bold" fill="#333" text-anchor="middle">10</text><text x="6" y="10" font-size="4.6" font-family="Liberation Sans" font-weight="bold" fill="#333" text-anchor="middle">01</text></svg>
<div class="t" style="left:450px;top:738px;font-size:15px;color:#9b1c1c;font-weight:normal;font-style:normal;font-family:'Liberation Sans', sans-serif;letter-spacing:-0.510px;">__doc__</div>
<div class="t" style="left:507px;top:738px;font-size:15px;color:#000;font-weight:normal;font-style:normal;font-family:'Liberation Sans', sans-serif;">=</div>
<div class="t" style="left:519px;top:738px;font-size:15px;color:#8f8f8f;font-weight:normal;font-style:normal;font-family:'Liberation Sans', sans-serif;letter-spacing:0.390px;">{unicode}</div>
<div class="t" style="left:587px;top:738px;font-size:15px;color:#000;font-weight:normal;font-style:normal;font-family:'Liberation Sans', sans-serif;letter-spacing:0.413px;">u'<b style="color:#000080">\n</b>Django settings for Reddit Clone project.<b style="color:#000080">\n\n</b>For more information on this file, see<b style="color:#000080">\n</b>https://docs.djangoproject.com,</div>
<div class="t" style="left:1423px;top:738px;font-size:15px;color:#8f8f8f;font-weight:normal;font-style:normal;font-family:'Liberation Sans', sans-serif;letter-spacing:-0.258px;">...</div>
<div class="t" style="left:1439px;top:738px;font-size:15px;color:#8f8f8f;font-weight:normal;font-style:normal;font-family:'Liberation Sans', sans-serif;letter-spacing:0.917px;">View</div>
<svg class="a" style="left:433px;top:763px" width="12" height="12" viewBox="0 0 12 12"><rect x="0.5" y="0.5" width="11" height="11" fill="#fff" stroke="#6e6e6e"/><rect x="2.5" y="2" width="7" height="8" fill="#bfe0f7"/><text x="6" y="5.6" font-size="4.6" font-family="Liberation Sans" font-weight="bold" fill="#333" text-anchor="middle">10</text><text x="6" y="10" font-size="4.6" font-family="Liberation Sans" font-weight="bold" fill="#333" text-anchor="middle">01</text></svg>
<div class="t" style="left:450px;top:760px;font-size:15px;color:#9b1c1c;font-weight:normal;font-style:normal;font-family:'Liberation Sans', sans-serif;letter-spacing:-0.292px;">__file__</div>
<div class="t" style="left:503px;top:760px;font-size:15px;color:#000;font-weight:normal;font-style:normal;font-family:'Liberation Sans', sans-serif;">=</div>
<div class="t" style="left:514px;top:760px;font-size:15px;color:#8f8f8f;font-weight:normal;font-style:normal;font-family:'Liberation Sans', sans-serif;letter-spacing:0.628px;">{str}</div>
<div class="t" style="left:546px;top:760px;font-size:15px;color:#000;font-weight:normal;font-style:normal;font-family:'Liberation Sans', sans-serif;letter-spacing:0.700px;">'/app/config/settings/common.pyc'</div>
<svg class="a" style="left:433px;top:785px" width="12" height="12" viewBox="0 0 12 12"><rect x="0.5" y="0.5" width="11" height="11" fill="#fff" stroke="#6e6e6e"/><rect x="2.5" y="2" width="7" height="8" fill="#bfe0f7"/><text x="6" y="5.6" font-size="4.6" font-family="Liberation Sans" font-weight="bold" fill="#333" text-anchor="middle">10</text><text x="6" y="10" font-size="4.6" font-family="Liberation Sans" font-weight="bold" fill="#333" text-anchor="middle">01</text></svg>
<div class="t" style="left:450px;top:782px;font-size:15px;color:#9b1c1c;font-weight:normal;font-style:normal;font-family:'Liberation Sans', sans-serif;letter-spacing:-0.444px;">__name__</div>
<div class="t" style="left:520px;top:782px;font-size:15px;color:#000;font-weight:normal;font-style:normal;font-family:'Liberation Sans', sans-serif;">=</div>
<div class="t" style="left:532px;top:782px;font-size:15px;color:#8f8f8f;font-weight:normal;font-style:normal;font-family:'Liberation Sans', sans-serif;letter-spacing:0.678px;">{str}</div>
<div class="t" style="left:563px;top:782px;font-size:15px;color:#000;font-weight:normal;font-style:normal;font-family:'Liberation Sans', sans-serif;letter-spacing:0.578px;">'config.settings.common'</div>
<svg class="a" style="left:433px;top:807px" width="12" height="12" viewBox="0 0 12 12"><rect x="0.5" y="0.5" width="11" height="11" fill="#fff" stroke="#6e6e6e"/><rect x="2.5" y="2" width="7" height="8" fill="#bfe0f7"/><text x="6" y="5.6" font-size="4.6" font-family="Liberation Sans" font-weight="bold" fill="#333" text-anchor="middle">10</text><text x="6" y="10" font-size="4.6" font-family="Liberation Sans" font-weight="bold" fill="#333" text-anchor="middle">01</text></svg>
<div class="t" style="left:450px;top:804px;font-size:15px;color:#9b1c1c;font-weight:normal;font-style:normal;font-family:'Liberation Sans', sans-serif;letter-spacing:-0.189px;">__package__</div>
<div class="t" style="left:540px;top:804px;font-size:15px;color:#000;font-weight:normal;font-style:normal;font-family:'Liberation Sans', sans-serif;">=</div>
<div class="t" style="left:552px;top:804px;font-size:15px;color:#8f8f8f;font-weight:normal;font-style:normal;font-family:'Liberation Sans', sans-serif;letter-spacing:0.399px;">{NoneType}</div>
<div class="t" style="left:636px;top:804px;font-size:15px;color:#000;font-weight:normal;font-style:normal;font-family:'Liberation Sans', sans-serif;letter-spacing:0.780px;">None</div>
<svg class="a" style="left:413px;top:831px" width="9" height="10" viewBox="0 0 9 10"><path d="M0 0L8 5L0 10z" fill="#a8a8a8"/></svg>
<svg class="a" style="left:433px;top:829px" width="12" height="12" viewBox="0 0 12 12"><rect x="0" y="0" width="12" height="2.6" fill="#c0914f"/><rect x="0" y="4.7" width="12" height="2.6" fill="#c0914f"/><rect x="0" y="9.4" width="12" height="2.6" fill="#c0914f"/></svg>
<div class="t" style="left:450px;top:826px;font-size:15px;color:#9b1c1c;font-weight:normal;font-style:normal;font-family:'Liberation Sans', sans-serif;letter-spacing:0.505px;">absolute_import</div>
<div class="t" style="left:566px;top:826px;font-size:15px;color:#000;font-weight:normal;font-style:normal;font-family:'Liberation Sans', sans-serif;">=</div>
<div class="t" style="left:579px;top:826px;font-size:15px;color:#8f8f8f;font-weight:normal;font-style:normal;font-family:'Liberation Sans', sans-serif;letter-spacing:0.390px;">{instance}</div>
<div class="t" style="left:650px;top:826px;font-size:15px;color:#000;font-weight:normal;font-style:normal;font-family:'Liberation Sans', sans-serif;letter-spacing:-0.116px;">_Feature: _Feature((2, 5, 0, 'alpha', 1), (3, 0, 0, 'alpha', 0), 16384)</div>
<svg class="a" style="left:413px;top:853px" width="9" height="10" viewBox="0 0 9 10"><path d="M0 0L8 5L0 10z" fill="#a8a8a8"/></svg>
<svg class="a" style="left:433px;top:851px" width="12" height="12" viewBox="0 0 12 12"><rect x="0" y="0" width="12" height="2.6" fill="#c0914f"/><rect x="0" y="4.7" width="12" height="2.6" fill="#c0914f"/><rect x="0" y="9.4" width="12" height="2.6" fill="#c0914f"/></svg>
<div class="t" style="left:450px;top:848px;font-size:15px;color:#9b1c1c;font-weight:normal;font-style:normal;font-family:'Liberation Sans', sans-serif;letter-spacing:0.466px;">environ</div>
<div class="t" style="left:505px;top:848px;font-size:15px;color:#000;font-weight:normal;font-style:normal;font-family:'Liberation Sans', sans-serif;">=</div>
<div class="t" style="left:516px;top:848px;font-size:15px;color:#8f8f8f;font-weight:normal;font-style:normal;font-family:'Liberation Sans', sans-serif;letter-spacing:0.626px;">{module}</div>
<div class="t" style="left:582px;top:848px;font-size:15px;color:#000;font-weight:normal;font-style:normal;font-family:'Liberation Sans', sans-serif;letter-spacing:0.420px;">&lt;module 'environ' from '/usr/local/lib/python2.7/site-packages/environ/__init__.pyc'&gt;</div>
<svg class="a" style="left:413px;top:875px" width="9" height="10" viewBox="0 0 9 10"><path d="M0 0L8 5L0 10z" fill="#a8a8a8"/></svg>
<svg class="a" style="left:433px;top:873px" width="12" height="12" viewBox="0 0 12 12"><rect x="0" y="0" width="12" height="2.6" fill="#c0914f"/><rect x="0" y="4.7" width="12" height="2.6" fill="#c0914f"/><rect x="0" y="9.4" width="12" height="2.6" fill="#c0914f"/></svg>
<div class="t" style="left:450px;top:870px;font-size:15px;color:#9b1c1c;font-weight:normal;font-style:normal;font-family:'Liberation Sans', sans-serif;letter-spacing:0.398px;">unicode_literals</div>
<div class="t" style="left:563px;top:870px;font-size:15px;color:#000;font-weight:normal;font-style:normal;font-family:'Liberation Sans', sans-serif;">=</div>
<div class="t" style="left:575px;top:870px;font-size:15px;color:#8f8f8f;font-weight:normal;font-style:normal;font-family:'Liberation Sans', sans-serif;letter-spacing:0.312px;">{instance}</div>
<div class="t" style="left:646px;top:870px;font-size:15px;color:#000;font-weight:normal;font-style:normal;font-family:'Liberation Sans', sans-serif;letter-spacing:-0.115px;">_Feature: _Feature((2, 6, 0, 'alpha', 2), (3, 0, 0, 'alpha', 0), 131072)</div>
<div class="a" style="left:1477px;top:714px;width:355px;height:26px;background:#e7e7e7;"></div>
<div class="a" style="left:1477px;top:740px;width:355px;height:1px;background:#c9c9c9;"></div>
<div class="a" style="left:1477px;top:741px;width:355px;height:270px;background:#ffffff;"></div>
<svg class="a" style="left:1483px;top:720px" width="13" height="13" viewBox="0 0 13 13"><path d="M6.5 0v13M0 6.5h13" stroke="#2aa040" stroke-width="2.2"/></svg>
<div class="a" style="left:1508px;top:725px;width:12px;height:2px;background:#8a8a8a;"></div>
<svg class="a" style="left:1533px;top:720px" width="12" height="12" viewBox="0 0 12 12"><path d="M6 0L12 6H8v6H4V6H0z" fill="#8a8a8a"/></svg>
<svg class="a" style="left:1558px;top:720px" width="12" height="12" viewBox="0 0 12 12"><path d="M6 12L12 6H8V0H4v6H0z" fill="#8a8a8a"/></svg>
<svg class="a" style="left:1582px;top:718px" width="14" height="16" viewBox="0 0 14 16"><path d="M1 5h6v10H1z" fill="none" stroke="#8a8a8a" stroke-width="1.6"/><path d="M5 1h5l3 3v9H8" fill="none" stroke="#8a8a8a" stroke-width="1.6"/></svg>
<div class="t" style="left:1613px;top:826px;font-size:15px;color:#a9a9a9;font-weight:normal;font-style:normal;font-family:'Liberation Sans', sans-serif;letter-spacing:0.514px;">No watches</div>
<div class="a" style="left:0px;top:1011px;width:1855px;height:1px;background:#9a9a9a;"></div>
<div class="a" style="left:0px;top:1012px;width:1855px;height:22px;background:#e7e7e7;"></div>
<div class="a" style="left:0px;top:1034px;width:1855px;height:1px;background:#a3a3a3;"></div>
<div class="a" style="left:550px;top:1012px;width:92px;height:22px;background:#c8c8c8;"></div>
<svg class="a" style="left:33px;top:1015px" width="14" height="16" viewBox="0 0 14 16"><rect x="3" y="0.5" width="7" height="6" rx="1.5" fill="#3d7ab6"/><rect x="0.5" y="3" width="5" height="6" rx="1.3" fill="#3d7ab6"/><rect x="7" y="5.5" width="5" height="6" rx="1.3" fill="#edbb22"/><rect x="3" y="8" width="7" height="5.5" rx="1.5" fill="#edbb22"/><path d="M9 10l3.5 3l-3.5 3" fill="none" stroke="#333" stroke-width="1.3"/></svg>
<div class="t" style="left:50px;top:1015px;font-size:14px;color:#000;font-weight:normal;font-style:normal;font-family:'Liberation Sans', sans-serif;letter-spacing:-0.142px;">Python Console</div>
<svg class="a" style="left:172px;top:1017px" width="12" height="12" viewBox="0 0 12 12"><rect x="0.5" y="0.5" width="11" height="11" fill="#d8d8d8" stroke="#7a7a7a"/><path d="M3 4l2 2l-2 2M6 8.5h3" fill="none" stroke="#555" stroke-width="0.9"/></svg>
<div class="t" style="left:188px;top:1015px;font-size:14px;color:#000;font-weight:normal;font-style:normal;font-family:'Liberation Sans', sans-serif;letter-spacing:0.013px;">Terminal</div>
<svg class="a" style="left:264px;top:1015px" width="14" height="14" viewBox="0 0 14 14"><path d="M0 0h9v2.5H2.5V10H0z" fill="#3d8ad0"/><circle cx="6.5" cy="7.5" r="4.5" fill="#3fae4f"/><circle cx="9" cy="10" r="3.8" fill="#f0a030"/></svg>
<div class="t" style="left:281px;top:1015px;font-size:14px;color:#000;font-weight:normal;font-style:normal;font-family:'Liberation Sans', sans-serif;letter-spacing:-0.135px;"><span style="text-decoration:underline">9</span>: Version Control</div>
<svg class="a" style="left:413px;top:1015px" width="14" height="14" viewBox="0 0 14 14"><circle cx="5.5" cy="5.5" r="4.3" fill="#d9ecf9" stroke="#6e6e6e" stroke-width="1.6"/><path d="M8.5 8.5L13 13" stroke="#6e6e6e" stroke-width="2.4"/></svg>
<div class="t" style="left:431px;top:1015px;font-size:14px;color:#000;font-weight:normal;font-style:normal;font-family:'Liberation Sans', sans-serif;letter-spacing:-0.802px;"><span style="text-decoration:underline">3</span>: Find</div>
<svg class="a" style="left:488px;top:1015px" width="12" height="14" viewBox="0 0 12 14"><path d="M0 0L11.5 7L0 14z" fill="#3fae4f"/></svg>
<div class="t" style="left:505px;top:1015px;font-size:14px;color:#000;font-weight:normal;font-style:normal;font-family:'Liberation Sans', sans-serif;letter-spacing:-1.253px;"><span style="text-decoration:underline">4</span>: Run</div>
<svg class="a" style="left:559px;top:1014px" width="18" height="18" viewBox="0 0 18 18"><path d="M1.5 1.5L3.5 3.5M5.5 0.8v2.2M9 1.5L8 3.5M1.5 15L3.5 13M5.5 15.5v-2.2M9 15L8 13" stroke="#555" stroke-width="1.1"/><path d="M10.2 3.5A5.2 5.2 0 1 0 10.2 12.8A7 7 0 0 1 10.2 3.5z" fill="#3dae4f"/><ellipse cx="11.3" cy="8.2" rx="1.8" ry="3" fill="#666"/><path d="M12 5.5Q12.8 3.8 14.8 3.8M12 11Q12.8 12.5 14 13" fill="none" stroke="#555" stroke-width="1.1"/><circle cx="14.5" cy="14.8" r="2.2" fill="#22e022"/></svg>
<div class="t" style="left:578px;top:1015px;font-size:14px;color:#000;font-weight:normal;font-style:normal;font-family:'Liberation Sans', sans-serif;letter-spacing:-0.406px;"><span style="text-decoration:underline">5</span>: Debug</div>
<svg class="a" style="left:652px;top:1014px" width="16" height="16" viewBox="0 0 16 16"><circle cx="4.5" cy="4" r="3.6" fill="#fff" stroke="#777"/><path d="M3 3.5h3M3 5h3" stroke="#777" stroke-width="0.8"/><rect x="6" y="4" width="8" height="3" rx="1.5" fill="#777"/><circle cx="10" cy="9" r="3.3" fill="#f0b070"/><rect x="6" y="12.5" width="8" height="3" fill="#4d8cc2"/></svg>
<div class="t" style="left:670px;top:1015px;font-size:14px;color:#000;font-weight:normal;font-style:normal;font-family:'Liberation Sans', sans-serif;letter-spacing:-1.086px;"><span style="text-decoration:underline">6</span>: TODO</div>
<svg class="a" style="left:1744px;top:1015px" width="12" height="12" viewBox="0 0 12 12"><path d="M0.5 0.5h11v8h-6l-3 3v-3h-2z" fill="#9a9a9a"/></svg>
<div class="t" style="left:1762px;top:1015px;font-size:14px;color:#000;font-weight:normal;font-style:normal;font-family:'Liberation Sans', sans-serif;letter-spacing:-0.133px;">Event Log</div>
<div class="a" style="left:9px;top:1039px;width:14px;height:14px;background:#c4c4c4;border:1px solid #6e6e6e;box-sizing:border-box;"></div>
<div class="t" style="left:31px;top:1037px;font-size:15px;color:#000;font-weight:normal;font-style:normal;font-family:'Liberation Sans', sans-serif;letter-spacing:0.293px;">Error running Docker: runserver: Can't run remote python interpreter: failed to create endpoint reddit_django_1 on network reddit_default: Bind for 0.0.0.0:8000 failed: port is already allocated (5 minutes ago)</div>
<div class="t" style="left:1590px;top:1037px;font-size:15px;color:#000;font-weight:normal;font-style:normal;font-family:'Liberation Sans', sans-serif;letter-spacing:-0.401px;">15:1</div>
<div class="t" style="left:1629px;top:1037px;font-size:15px;color:#000;font-weight:normal;font-style:normal;font-family:'Liberation Sans', sans-serif;letter-spacing:-2.516px;">LF</div>
<svg class="a" style="left:1645px;top:1040px" width="6" height="10" viewBox="0 0 6 10"><path d="M0 4L3 0.5L6 4zM0 6L3 9.5L6 6z" fill="#555"/></svg>
<div class="t" style="left:1666px;top:1037px;font-size:15px;color:#a0a0a0;font-weight:normal;font-style:normal;font-family:'Liberation Sans', sans-serif;letter-spacing:-0.375px;">UTF-8</div>
<div class="t" style="left:1721px;top:1037px;font-size:15px;color:#000;font-weight:normal;font-style:normal;font-family:'Liberation Sans', sans-serif;letter-spacing:0.064px;">Git: master</div>
<svg class="a" style="left:1795px;top:1040px" width="6" height="10" viewBox="0 0 6 10"><path d="M0 4L3 0.5L6 4zM0 6L3 9.5L6 6z" fill="#555"/></svg>
<svg class="a" style="left:1812px;top:1040px" width="9" height="11" viewBox="0 0 9 11"><path d="M2 5V3a2.5 2.5 0 0 1 5 0" fill="none" stroke="#777" stroke-width="1.2"/><rect x="0.5" y="5" width="8" height="6" fill="#999"/></svg>
<svg class="a" style="left:1833px;top:1038px" width="14" height="15" viewBox="0 0 14 15"><circle cx="7" cy="5" r="4.5" fill="none" stroke="#6e6e6e" stroke-width="1.3"/><path d="M2.5 4h9" stroke="#6e6e6e" stroke-width="1.3"/><path d="M3 9.5l-1.5 5h11l-1.5-5" fill="none" stroke="#6e6e6e" stroke-width="1.3"/></svg>
</body></html>
